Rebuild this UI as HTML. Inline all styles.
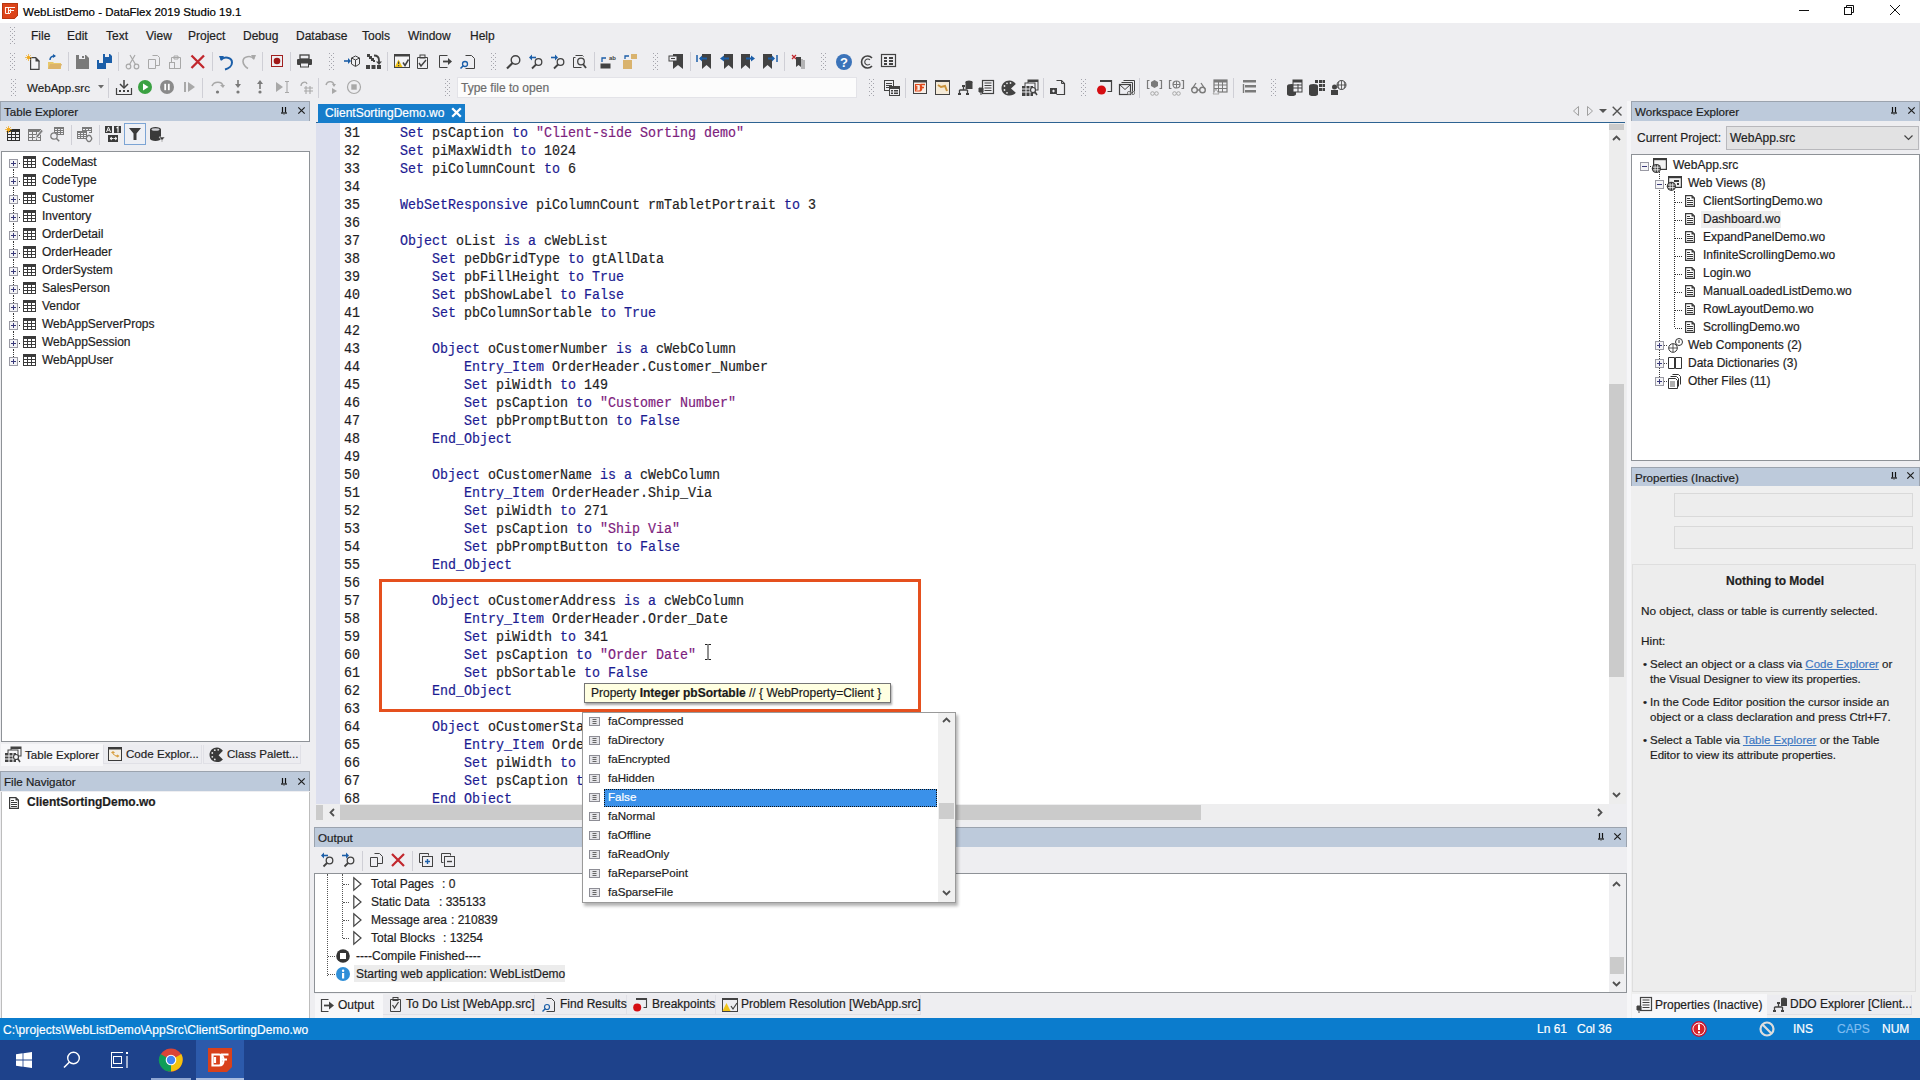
<!DOCTYPE html>
<html><head><meta charset="utf-8">
<style>
*{margin:0;padding:0;box-sizing:border-box}
html,body{width:1920px;height:1080px;overflow:hidden;background:#eeeef1;font-family:"Liberation Sans",sans-serif;font-size:12px;color:#1e1e1e}
.a{position:absolute}
svg{position:absolute;overflow:visible}
.t{position:absolute;white-space:pre;line-height:14px;-webkit-text-stroke:0.2px currentColor}
.ptitle{position:absolute;background:#bdcadb;height:20px;border:1px solid #9ba3ae;border-bottom:none}
.ptitle .tx{position:absolute;left:3px;top:3px;font-size:11.6px;color:#1e1e1e;white-space:pre;-webkit-text-stroke:0.2px currentColor}
.code{position:absolute;font-family:"Liberation Mono",monospace;font-size:15.5px;white-space:pre;line-height:18px;transform-origin:0 0;transform:scaleX(0.8602);color:#1e1e1e;-webkit-text-stroke:0.2px currentColor}
.k{color:#1c1c92}
.s{color:#7d217d}
.ln{position:absolute;font-family:"Liberation Mono",monospace;font-size:15.5px;line-height:18px;white-space:pre;color:#1e1e1e;transform-origin:0 0;transform:scaleX(0.8602);-webkit-text-stroke:0.2px currentColor}
.grip{position:absolute;width:5px;background-image:radial-gradient(circle at 1px 1px,#a9a9b0 0.55px,transparent 0.85px),radial-gradient(circle at 1px 1px,#a9a9b0 0.55px,transparent 0.85px);background-size:4px 4px,4px 4px;background-position:0 0,2px 2px}
.sep{position:absolute;width:1px;background:#cfcfd6}
.tr{position:absolute;white-space:pre;font-size:12px;color:#1e1e1e;line-height:14px;-webkit-text-stroke:0.2px currentColor}
</style></head><body>
<!-- TITLE BAR -->
<div class="a" style="left:0;top:0;width:1920px;height:23px;background:#fff"></div>
<svg style="left:2px;top:3px" width="16" height="16"><path d="M0 0H16V12.5L12.5 16H0Z" fill="#dc4318"/><path d="M0.5 0.5H15.5V12.3L12.3 15.5H0.5Z" fill="none" stroke="#b8360f" stroke-width="1"/><path d="M3.5 4.5H8.5M3.5 4v6.5M3.5 10.5H8M8.5 6v4M6.5 4.5H13M6.5 4.5v6M6.5 7.5H12" fill="none" stroke="#fff5ee" stroke-width="1.1"/></svg>
<div class="t" style="left:23px;top:5px;font-size:11.5px;color:#000">WebListDemo - DataFlex 2019 Studio 19.1</div>
<svg style="left:1799px;top:10px" width="12" height="2"><rect x="0" y="0" width="10" height="1" fill="#111"/></svg>
<svg style="left:1844px;top:5px" width="12" height="12"><rect x="0.5" y="2.5" width="7" height="7" fill="none" stroke="#111"/><path d="M2.5 2.5V0.5H9.5V7.5H7.5" fill="none" stroke="#111"/></svg>
<svg style="left:1890px;top:5px" width="12" height="12"><path d="M0 0L10 10M10 0L0 10" stroke="#111" stroke-width="1"/></svg>

<svg style="left:10px;top:27px" width="5" height="18" fill="#a4a4ac"><rect x="0" y="0" width="1" height="1"/><rect x="4" y="0" width="1" height="1"/><rect x="2" y="2" width="1" height="1"/><rect x="0" y="4" width="1" height="1"/><rect x="4" y="4" width="1" height="1"/><rect x="2" y="6" width="1" height="1"/><rect x="0" y="8" width="1" height="1"/><rect x="4" y="8" width="1" height="1"/><rect x="2" y="10" width="1" height="1"/><rect x="0" y="12" width="1" height="1"/><rect x="4" y="12" width="1" height="1"/><rect x="2" y="14" width="1" height="1"/><rect x="0" y="16" width="1" height="1"/><rect x="4" y="16" width="1" height="1"/></svg>
<div class="t" style="left:31px;top:29px">File</div>
<div class="t" style="left:67px;top:29px">Edit</div>
<div class="t" style="left:106px;top:29px">Text</div>
<div class="t" style="left:146px;top:29px">View</div>
<div class="t" style="left:188px;top:29px">Project</div>
<div class="t" style="left:243px;top:29px">Debug</div>
<div class="t" style="left:296px;top:29px">Database</div>
<div class="t" style="left:362px;top:29px">Tools</div>
<div class="t" style="left:408px;top:29px">Window</div>
<div class="t" style="left:470px;top:29px">Help</div>

<svg style="left:25px;top:54px" width="16" height="16"><path d="M5.6 3.6h5l3.4 3.4v8.4H5.6z" fill="#f4f4f6" stroke="#424242" stroke-width="1.2"/><path d="M10.5 3v4.5H15z" fill="#424242"/><circle cx="3.5" cy="3.5" r="1.5" fill="#f0a81a"/><path d="M3.5 0v7M0 3.5h7M1.2 1.2l4.6 4.6M5.8 1.2L1.2 5.8" stroke="#f0a81a" stroke-width="0.7"/></svg>
<svg style="left:47px;top:54px" width="16" height="16"><path d="M1 8h5l1 1h7v6H1z" fill="#e8c86a"/><path d="M1 15l2-5h12l-2 5z" fill="#dcb36a"/><path d="M3 6c0-3 2-4 5-4" fill="none" stroke="#1b5ea8" stroke-width="1.5"/><path d="M6 0l3 2-3 2z" fill="#1b5ea8"/></svg>
<svg style="left:75px;top:54px" width="16" height="16"><path d="M1 1h10l3 3v11H1z" fill="#7a7a7a"/><rect x="4" y="1" width="6" height="4" fill="#eeeef2"/><rect x="7" y="2" width="2" height="2" fill="#7a7a7a"/></svg>
<svg style="left:97px;top:54px" width="16" height="16"><path d="M6 0h7l2 2v7H6z" fill="#1b5ea8"/><path d="M0 6h7l2 2v7H0z" fill="#1b5ea8"/><rect x="2" y="6" width="4" height="3" fill="#eeeef2"/><rect x="8" y="0" width="4" height="3" fill="#eeeef2"/></svg>
<svg style="left:125px;top:54px" width="16" height="16"><circle cx="3.5" cy="12.5" r="2.3" fill="none" stroke="#a8a8a8" stroke-width="1.2"/><circle cx="11.5" cy="12.5" r="2.3" fill="none" stroke="#a8a8a8" stroke-width="1.2"/><path d="M4.5 10.5L10 1M10.5 10.5L5 1" stroke="#a8a8a8" stroke-width="1.2"/></svg>
<svg style="left:147px;top:54px" width="16" height="16"><path d="M1.5 5.5h7v9h-7z" fill="#eeeef2" stroke="#a8a8a8"/><path d="M5.5 1.5h5l2 2v8h-4" fill="none" stroke="#a8a8a8"/></svg>
<svg style="left:168px;top:54px" width="16" height="16"><path d="M3.5 3.5h9v11h-9z" fill="none" stroke="#a8a8a8"/><path d="M6 2h4v3H6z" fill="none" stroke="#a8a8a8"/><rect x="1.5" y="8.5" width="5" height="6" fill="#eeeef2" stroke="#a8a8a8"/></svg>
<svg style="left:190px;top:54px" width="16" height="16"><path d="M1.5 1.5L14 14M14 1.5L1.5 14" stroke="#c1272d" stroke-width="2.3"/></svg>
<svg style="left:219px;top:54px" width="16" height="16"><path d="M2 6c3-4 11-3 11 2.5 0 3-3 6-7 7" fill="none" stroke="#1b5ea8" stroke-width="2"/><path d="M0 2l5 0-3 5z" fill="#1b5ea8"/></svg>
<svg style="left:241px;top:54px" width="16" height="16"><path d="M13 5C10 1 2 2 2 7.5c0 3 3 6 5 7" fill="none" stroke="#a8a8a8" stroke-width="1.6"/><path d="M15 1l-5 0 3 5z" fill="#a8a8a8"/></svg>
<svg style="left:270px;top:54px" width="16" height="16"><rect x="1.5" y="1.5" width="11" height="11" fill="none" stroke="#a02020"/><circle cx="7" cy="7" r="3.3" fill="#a01818"/></svg>
<svg style="left:297px;top:54px" width="16" height="16"><rect x="0" y="5" width="15" height="6" rx="1" fill="#424242"/><rect x="3" y="1" width="9" height="4" fill="none" stroke="#424242" stroke-width="1.3"/><rect x="3.5" y="9" width="8" height="4" fill="#eeeef2" stroke="#424242"/></svg>
<svg style="left:344px;top:54px" width="16" height="16"><path d="M0 7h5" stroke="#1b5ea8" stroke-width="1.6"/><path d="M4 4l3 3-3 3z" fill="#1b5ea8"/><path d="M11.5 2l4 2v6l-4 2.5-4-2.5V4z" fill="none" stroke="#424242"/><path d="M7.5 4l4 2 4-2M11.5 6v6" fill="none" stroke="#424242"/></svg>
<svg style="left:366px;top:54px" width="16" height="16"><rect x="1" y="0" width="3" height="3" fill="#424242"/><rect x="3" y="2" width="3" height="3" fill="#424242"/><rect x="5" y="4" width="3" height="3" fill="#424242"/><rect x="7" y="6" width="2" height="2" fill="#424242"/><path d="M8 1.5c3.5 0 5 1.5 5 5v2" fill="none" stroke="#424242" stroke-width="1.8"/><path d="M10 7.5l3 3.5 3-3.5z" fill="#424242"/><rect x="0" y="11" width="4" height="4" fill="#424242"/><rect x="5.5" y="11" width="4" height="4" fill="#424242"/><rect x="11" y="11" width="4" height="4" fill="#424242"/></svg>
<svg style="left:394px;top:54px" width="16" height="16"><rect x="0" y="0" width="16" height="14" fill="#424242"/><rect x="1" y="2.5" width="14" height="10.5" fill="#f4f4f6"/><path d="M4.5 5.5l4 7.5H0.8z" fill="#f0c419"/><rect x="4" y="7.5" width="1.2" height="2.5" fill="#424242"/><rect x="4" y="11" width="1.2" height="1.2" fill="#424242"/><path d="M9 8.5l2 3 3.5-6" fill="none" stroke="#424242" stroke-width="1.5"/></svg>
<svg style="left:416px;top:54px" width="16" height="16"><path d="M1.5 3.5h10v11h-10z" fill="none" stroke="#424242"/><rect x="4" y="1" width="5" height="3" fill="none" stroke="#424242"/><path d="M3 9l2 3 5-6" fill="none" stroke="#424242" stroke-width="1.4"/></svg>
<svg style="left:438px;top:54px" width="16" height="16"><path d="M9.5 1.5h-8v12h8" fill="none" stroke="#424242"/><path d="M5 7.5h7" stroke="#424242" stroke-width="1.8"/><path d="M10 4l4 3.5-4 3.5z" fill="#424242"/></svg>
<svg style="left:460px;top:54px" width="16" height="16"><path d="M5.5 1.5h6l3 3v10h-9" fill="none" stroke="#424242"/><circle cx="5" cy="10" r="2.5" fill="none" stroke="#1b5ea8" stroke-width="1.3"/><path d="M3.5 11.5L0.5 14.5" stroke="#1b5ea8" stroke-width="1.6"/></svg>
<svg style="left:506px;top:54px" width="16" height="16"><circle cx="9.5" cy="6" r="4.3" fill="none" stroke="#424242" stroke-width="1.4"/><path d="M6.5 9L1 14.5" stroke="#424242" stroke-width="2.2"/></svg>
<svg style="left:529px;top:54px" width="16" height="16"><circle cx="9.5" cy="8" r="3.3" fill="none" stroke="#424242" stroke-width="1.3"/><path d="M7 10.5L3 14.5" stroke="#424242" stroke-width="1.8"/><path d="M2 3.5h5" stroke="#1b5ea8" stroke-width="1.6"/><path d="M3 0.5L0 3.5 3 6.5z" fill="#1b5ea8"/></svg>
<svg style="left:551px;top:54px" width="16" height="16"><circle cx="9.5" cy="8" r="3.3" fill="none" stroke="#424242" stroke-width="1.3"/><path d="M7 10.5L3 14.5" stroke="#424242" stroke-width="1.8"/><path d="M0 3.5h5" stroke="#1b5ea8" stroke-width="1.6"/><path d="M4 0.5L7 3.5 4 6.5z" fill="#1b5ea8"/></svg>
<svg style="left:572px;top:54px" width="16" height="16"><path d="M3.5 3.5h-2v10h8" fill="none" stroke="#424242"/><path d="M3.5 1.5h7l1 1" fill="none" stroke="#424242"/><circle cx="9" cy="7.5" r="3.3" fill="none" stroke="#424242" stroke-width="1.3"/><path d="M11 10l3 4" stroke="#424242" stroke-width="1.8"/></svg>
<svg style="left:600px;top:54px" width="16" height="16"><rect x="0.5" y="9.5" width="10" height="5" fill="#424242"/><text x="9" y="6" font-size="6" font-family="Liberation Sans" font-weight="bold" fill="#424242">ab</text><path d="M2 8V4h4" fill="none" stroke="#1b5ea8" stroke-width="1.3"/></svg>
<svg style="left:623px;top:54px" width="16" height="16"><rect x="8" y="0" width="6" height="5" fill="#d9b36e"/><rect x="0" y="6" width="9" height="9" fill="#d9b36e"/><path d="M2 5V2h4" fill="none" stroke="#1b5ea8" stroke-width="1.3"/></svg>
<svg style="left:669px;top:54px" width="16" height="16"><path d="M4 0h10v15l-5-4-5 4z" fill="#424242"/><rect x="0" y="2" width="8" height="5" fill="#eeeef2" stroke="#424242"/><path d="M2 4.5h4" stroke="#424242"/></svg>
<svg style="left:697px;top:54px" width="16" height="16"><path d="M5 0h9v15l-4.5-4-4.5 4z" fill="#424242"/><path d="M0 1v7" stroke="#1b5ea8" stroke-width="1.5"/><path d="M3 4.5h7" stroke="#1b5ea8" stroke-width="2"/><path d="M5 1.5L2 4.5 5 7.5z" fill="#1b5ea8"/></svg>
<svg style="left:720px;top:54px" width="16" height="16"><path d="M4 0h9v15l-4.5-4-4.5 4z" fill="#424242"/><path d="M2 4.5h7" stroke="#1b5ea8" stroke-width="2"/><path d="M4 1.5L0 4.5 4 7.5z" fill="#1b5ea8"/></svg>
<svg style="left:741px;top:54px" width="16" height="16"><path d="M0 0h9v15l-4.5-4-4.5 4z" fill="#424242"/><path d="M5 4.5h6" stroke="#1b5ea8" stroke-width="2"/><path d="M10 1.5L14 4.5 10 7.5z" fill="#1b5ea8"/></svg>
<svg style="left:763px;top:54px" width="16" height="16"><path d="M0 0h9v15l-4.5-4-4.5 4z" fill="#424242"/><path d="M5 4.5h5" stroke="#1b5ea8" stroke-width="2"/><path d="M9 1.5L12 4.5 9 7.5z" fill="#1b5ea8"/><path d="M14 1v7" stroke="#1b5ea8" stroke-width="1.5"/></svg>
<svg style="left:791px;top:54px" width="16" height="16"><path d="M1 1l4 4M5 1L1 5" stroke="#c1272d" stroke-width="1.2"/><path d="M5 3h5v10l-2.5-2-2.5 2z" fill="#424242"/><path d="M11 5v10M13 6v9" stroke="#7a7a7a"/></svg>
<svg style="left:836px;top:54px" width="16" height="16"><circle cx="8" cy="8" r="8" fill="#3b73b9"/><text x="8" y="12.5" font-size="13" text-anchor="middle" font-family="Liberation Sans" font-weight="bold" fill="#fff">?</text></svg>
<svg style="left:859px;top:54px" width="16" height="16"><path d="M13 4A6 6 0 1 0 13 12" fill="none" stroke="#424242" stroke-width="1.6"/><path d="M11 6A3 3 0 1 0 11 10" fill="none" stroke="#424242" stroke-width="1.1"/></svg>
<svg style="left:881px;top:54px" width="16" height="16"><rect x="0.5" y="0.5" width="14" height="12" fill="none" stroke="#424242" stroke-width="1.2"/><rect x="3" y="3" width="3" height="2" fill="#424242"/><rect x="8" y="3" width="4" height="2" fill="#424242"/><rect x="3" y="6" width="3" height="2" fill="#424242"/><rect x="8" y="6" width="4" height="2" fill="#424242"/><rect x="3" y="9" width="3" height="2" fill="#424242"/><rect x="8" y="9" width="4" height="2" fill="#424242"/></svg>
<svg style="left:116px;top:80px" width="16" height="16"><path d="M0.5 8v6.5h15V8" fill="none" stroke="#424242" stroke-width="1.2"/><path d="M8 0v7" stroke="#424242" stroke-width="1.5"/><path d="M4 4l4 4 4-4" fill="none" stroke="#424242" stroke-width="1.5"/><rect x="3" y="10" width="2" height="2" fill="#424242"/><rect x="7" y="10" width="2" height="2" fill="#424242"/><rect x="11" y="10" width="2" height="2" fill="#424242"/></svg>
<svg style="left:138px;top:80px" width="16" height="16"><circle cx="7" cy="7" r="7" fill="#3aa142"/><path d="M5 3.5l5.5 3.5L5 10.5z" fill="#fff"/></svg>
<svg style="left:160px;top:80px" width="16" height="16"><circle cx="7" cy="7" r="7" fill="#8a8a8a"/><rect x="4.3" y="3.8" width="1.8" height="6.4" fill="#fff"/><rect x="7.9" y="3.8" width="1.8" height="6.4" fill="#fff"/></svg>
<svg style="left:184px;top:80px" width="16" height="16"><rect x="0" y="2" width="2" height="10" fill="#a8a8a8"/><path d="M4 2l7 5-7 5z" fill="#a8a8a8"/></svg>
<svg style="left:211px;top:80px" width="16" height="16"><path d="M1 6C3 1 11 1 12 6" fill="none" stroke="#a8a8a8" stroke-width="1.6"/><path d="M9 5h5l-2 3z" fill="#a8a8a8"/><circle cx="6.5" cy="12" r="1.6" fill="#7a7a7a"/></svg>
<svg style="left:234px;top:80px" width="16" height="16"><path d="M4 0v6" stroke="#7a7a7a" stroke-width="1.6"/><path d="M1 4l3 4 3-4z" fill="#7a7a7a"/><circle cx="4" cy="12" r="1.6" fill="#7a7a7a"/></svg>
<svg style="left:256px;top:80px" width="16" height="16"><path d="M4 3v6" stroke="#7a7a7a" stroke-width="1.6"/><path d="M1 4l3-4 3 4z" fill="#7a7a7a"/><circle cx="4" cy="12" r="1.6" fill="#7a7a7a"/></svg>
<svg style="left:276px;top:80px" width="16" height="16"><path d="M0 2l7 5-7 5z" fill="#a8a8a8"/><path d="M9 1.5h4M11 1.5v11M9 12.5h4" stroke="#a8a8a8" stroke-width="1.1"/></svg>
<svg style="left:299px;top:80px" width="16" height="16"><path d="M2 6c0-4 5-5 6-2" fill="none" stroke="#a8a8a8" stroke-width="1.3"/><path d="M5 8h9M5 11h9M7 6v8M11 6v8" stroke="#a8a8a8" stroke-width="1.1"/></svg>
<svg style="left:325px;top:80px" width="16" height="16"><path d="M1 5c1-4 7-5 8 0" fill="none" stroke="#a8a8a8" stroke-width="1.4"/><path d="M7 4h4l-2 3z" fill="#a8a8a8"/><path d="M7 8l5 3-5 3z" fill="#a8a8a8"/></svg>
<svg style="left:347px;top:80px" width="16" height="16"><circle cx="7" cy="7" r="6.5" fill="none" stroke="#a8a8a8" stroke-width="1.2"/><rect x="4.3" y="4.3" width="5.4" height="5.4" fill="#a8a8a8"/></svg>
<svg style="left:884px;top:80px" width="16" height="16"><rect x="0" y="0" width="10" height="11" fill="#424242"/><rect x="1" y="1" width="8" height="9" fill="#eeeef2"/><rect x="2" y="3" width="6" height="1" fill="#424242"/><rect x="2" y="5" width="6" height="1" fill="#424242"/><rect x="2" y="7" width="4" height="1" fill="#424242"/><rect x="5" y="6" width="11" height="10" fill="#424242"/><rect x="6" y="9" width="9" height="6" fill="#eeeef2"/><rect x="7" y="10" width="2" height="1.5" fill="#424242"/><rect x="10" y="10" width="4" height="1.5" fill="#424242"/><rect x="7" y="12.5" width="2" height="1.5" fill="#424242"/><rect x="10" y="12.5" width="4" height="1.5" fill="#424242"/></svg>
<svg style="left:913px;top:80px" width="16" height="16"><rect x="0" y="0" width="14" height="14" fill="#424242"/><rect x="1" y="2.5" width="12" height="10.5" fill="#f7efe9"/><path d="M2.5 4.5h3.5c2 0 2.8 1.3 2.8 3.2S8 11 6 11H2.5zM3.8 5.8v3.9" fill="none" stroke="#e0491a" stroke-width="1.2"/><path d="M7.5 4.5h4.5M7.5 4.5V11M7.5 7.5h3.5" fill="none" stroke="#e0491a" stroke-width="1.3"/></svg>
<svg style="left:935px;top:80px" width="16" height="16"><rect x="0.5" y="0.5" width="14" height="14" fill="#f4ead8" stroke="#424242"/><rect x="0" y="0" width="15" height="2" fill="#424242"/><path d="M3 5l3 2 4-1 2 5" fill="none" stroke="#c9923a" stroke-width="2"/></svg>
<svg style="left:957px;top:80px" width="16" height="16"><path d="M6.5 6v4M2.5 10v4M10.5 10v4M2.5 10h8" fill="none" stroke="#424242" stroke-width="1.3"/><rect x="5" y="5" width="3" height="2" fill="#424242"/><rect x="1" y="13" width="3" height="2" fill="#424242"/><rect x="9" y="13" width="3" height="2" fill="#424242"/><ellipse cx="12" cy="2" rx="3.5" ry="1.5" fill="#424242"/><rect x="8.5" y="2" width="7" height="7" fill="#424242"/></svg>
<svg style="left:979px;top:80px" width="16" height="16"><rect x="3.5" y="0.5" width="11" height="13" fill="none" stroke="#424242" stroke-width="1.2"/><path d="M5.5 3h7M5.5 5.5h7M5.5 8h7M5.5 10.5h7" stroke="#424242"/><path d="M0 8h4v4h-4zM2 12v3" fill="#424242" stroke="#424242"/></svg>
<svg style="left:1001px;top:80px" width="16" height="16"><path d="M8.5 0.5C4 0.5 0.5 3.8 0.5 8.2S4 15.5 8.5 15.5c2.7 0 4.8-1.1 6.3-2.8L10 8.5l4.8-4.6C13.3 1.8 11.2 0.5 8.5 0.5z" fill="#424242"/><circle cx="3.5" cy="6" r="0.9" fill="#e8e8e8"/><circle cx="6" cy="3.3" r="0.9" fill="#e8e8e8"/><circle cx="3.5" cy="10" r="0.9" fill="#e8e8e8"/><circle cx="6" cy="12.8" r="0.9" fill="#e8e8e8"/><circle cx="9.5" cy="3" r="0.9" fill="#e8e8e8"/></svg>
<svg style="left:1022px;top:80px" width="16" height="16"><rect x="6" y="0" width="10" height="10" fill="none" stroke="#424242"/><rect x="6" y="0" width="10" height="2" fill="#424242"/><rect x="3" y="3" width="10" height="10" fill="#eeeef2" stroke="#424242"/><rect x="0" y="6" width="11" height="10" fill="#424242"/><path d="M0 9h11M0 12h11M4 6v10M8 6v10" stroke="#eeeef2"/><circle cx="11" cy="10" r="2.5" fill="#eeeef2" stroke="#424242" stroke-width="1.2"/><path d="M13 12l2 3" stroke="#424242" stroke-width="1.5"/></svg>
<svg style="left:1050px;top:80px" width="16" height="16"><path d="M6.5 0.5h5l3 3v11h-8" fill="none" stroke="#424242" stroke-width="1.2"/><path d="M11.5 0.5v3h3" fill="none" stroke="#424242"/><rect x="0" y="8" width="7" height="6" fill="#424242"/><path d="M2 11l1.5-1.5v3zM5 11l-1.5-1.5v3z" fill="#eeeef2"/></svg>
<svg style="left:1097px;top:80px" width="16" height="16"><path d="M3.5 0.5h11v11h-4" fill="none" stroke="#424242" stroke-width="1.2"/><rect x="3" y="0" width="12" height="2" fill="#424242"/><circle cx="4.5" cy="10" r="4.5" fill="#d50d12"/></svg>
<svg style="left:1119px;top:80px" width="16" height="16"><path d="M4.5 0.5h11v11" fill="none" stroke="#424242"/><path d="M2.5 2.5h11v11" fill="none" stroke="#424242"/><rect x="0.5" y="4.5" width="11" height="10" fill="#eeeef2" stroke="#424242" stroke-width="1.2"/><path d="M0.5 4.5l5.5 5 5.5-5" fill="none" stroke="#424242"/><circle cx="10" cy="13" r="1.6" fill="none" stroke="#7a7a7a"/><circle cx="14" cy="13" r="1.6" fill="none" stroke="#7a7a7a"/></svg>
<svg style="left:1147px;top:80px" width="16" height="16"><path d="M2.5 0.5h-2v8h2M12.5 0.5h2v8h-2" fill="none" stroke="#7a7a7a" stroke-width="1.2"/><path d="M4 2l3.5-2 3.5 2v4l-3.5 2-3.5-2z" fill="#7a7a7a"/><circle cx="5.5" cy="13.5" r="1.8" fill="none" stroke="#a8a8a8"/><circle cx="9.5" cy="13.5" r="1.8" fill="none" stroke="#a8a8a8"/></svg>
<svg style="left:1169px;top:80px" width="16" height="16"><path d="M2.5 0.5h-2v8h2M12.5 0.5h2v8h-2" fill="none" stroke="#7a7a7a" stroke-width="1.2"/><circle cx="7.5" cy="4.5" r="3.5" fill="none" stroke="#7a7a7a" stroke-width="1.2"/><path d="M4 4.5h7M7.5 1v7" stroke="#7a7a7a"/><circle cx="5.5" cy="13.5" r="1.8" fill="none" stroke="#a8a8a8"/><circle cx="9.5" cy="13.5" r="1.8" fill="none" stroke="#a8a8a8"/></svg>
<svg style="left:1191px;top:80px" width="16" height="16"><circle cx="3.5" cy="10" r="2.8" fill="none" stroke="#7a7a7a" stroke-width="1.4"/><circle cx="11.5" cy="10" r="2.8" fill="none" stroke="#7a7a7a" stroke-width="1.4"/><path d="M1 9L5 3M14 9L10 3M6 10h3" fill="none" stroke="#7a7a7a" stroke-width="1.3"/></svg>
<svg style="left:1213px;top:80px" width="16" height="16"><rect x="1" y="0" width="13" height="12" fill="none" stroke="#7a7a7a" stroke-width="1.2"/><rect x="1" y="0" width="13" height="2.5" fill="#7a7a7a"/><path d="M1 5h13M1 8.5h13M5.5 0v12M9.5 0v12" stroke="#7a7a7a"/><path d="M3 9l-3 5h6z" fill="#eeeef2" stroke="#a8a8a8"/></svg>
<svg style="left:1241px;top:80px" width="16" height="16"><rect x="2" y="0" width="13" height="2.5" fill="#7a7a7a"/><rect x="4" y="5" width="11" height="2.5" fill="#7a7a7a"/><rect x="4" y="10" width="11" height="2.5" fill="#7a7a7a"/><path d="M2.5 4v9" fill="none" stroke="#7a7a7a" stroke-width="1.4"/></svg>
<svg style="left:1287px;top:80px" width="16" height="16"><ellipse cx="4.5" cy="6" rx="4.5" ry="2" fill="#424242"/><rect x="0" y="6" width="9" height="8" fill="#424242"/><ellipse cx="4.5" cy="14" rx="4.5" ry="2" fill="#424242"/><rect x="6" y="0" width="9" height="12" fill="#eeeef2" stroke="#424242"/><rect x="6" y="0" width="9" height="2.5" fill="#424242"/><path d="M11 4v8M6 5h9M6 8h9" stroke="#424242"/></svg>
<svg style="left:1309px;top:80px" width="16" height="16"><ellipse cx="4.5" cy="6" rx="4.5" ry="2" fill="#424242"/><rect x="0" y="6" width="9" height="8" fill="#424242"/><ellipse cx="4.5" cy="14" rx="4.5" ry="2" fill="#424242"/><rect x="6" y="0" width="3" height="3" fill="#424242"/><rect x="10" y="0" width="3" height="3" fill="#424242"/><rect x="13.5" y="0" width="2.5" height="3" fill="#424242"/><rect x="10" y="4" width="3" height="3" fill="#424242"/><rect x="13.5" y="4" width="2.5" height="3" fill="#424242"/><rect x="10" y="8" width="3" height="3" fill="#424242"/><rect x="13.5" y="8" width="2.5" height="3" fill="#424242"/></svg>
<svg style="left:1331px;top:80px" width="16" height="16"><circle cx="10.5" cy="5" r="4.5" fill="none" stroke="#424242"/><path d="M6 5h9M10.5 0.5v9M8 1.5c-1 2-1 5 0 7M13 1.5c1 2 1 5 0 7" fill="none" stroke="#424242" stroke-width="0.8"/><circle cx="3.5" cy="7" r="2.5" fill="#424242"/><rect x="0" y="10" width="7" height="5" fill="#424242"/></svg>
<div class="sep" style="left:68px;top:52px;height:19px"></div>
<div class="sep" style="left:118px;top:52px;height:19px"></div>
<div class="sep" style="left:212px;top:52px;height:19px"></div>
<div class="sep" style="left:262px;top:52px;height:19px"></div>
<div class="sep" style="left:290px;top:52px;height:19px"></div>
<div class="sep" style="left:387px;top:52px;height:19px"></div>
<div class="sep" style="left:594px;top:52px;height:19px"></div>
<div class="sep" style="left:690px;top:52px;height:19px"></div>
<div class="sep" style="left:784px;top:52px;height:19px"></div>
<div class="sep" style="left:108px;top:78px;height:20px"></div>
<div class="sep" style="left:202px;top:78px;height:20px"></div>
<div class="sep" style="left:318px;top:78px;height:20px"></div>
<div class="sep" style="left:905px;top:78px;height:20px"></div>
<div class="sep" style="left:1043px;top:78px;height:20px"></div>
<div class="sep" style="left:1139px;top:78px;height:20px"></div>
<div class="sep" style="left:1233px;top:78px;height:20px"></div>
<svg style="left:10px;top:53px" width="5" height="18" fill="#a4a4ac"><rect x="0" y="0" width="1" height="1"/><rect x="4" y="0" width="1" height="1"/><rect x="2" y="2" width="1" height="1"/><rect x="0" y="4" width="1" height="1"/><rect x="4" y="4" width="1" height="1"/><rect x="2" y="6" width="1" height="1"/><rect x="0" y="8" width="1" height="1"/><rect x="4" y="8" width="1" height="1"/><rect x="2" y="10" width="1" height="1"/><rect x="0" y="12" width="1" height="1"/><rect x="4" y="12" width="1" height="1"/><rect x="2" y="14" width="1" height="1"/><rect x="0" y="16" width="1" height="1"/><rect x="4" y="16" width="1" height="1"/></svg>
<svg style="left:329px;top:53px" width="5" height="18" fill="#a4a4ac"><rect x="0" y="0" width="1" height="1"/><rect x="4" y="0" width="1" height="1"/><rect x="2" y="2" width="1" height="1"/><rect x="0" y="4" width="1" height="1"/><rect x="4" y="4" width="1" height="1"/><rect x="2" y="6" width="1" height="1"/><rect x="0" y="8" width="1" height="1"/><rect x="4" y="8" width="1" height="1"/><rect x="2" y="10" width="1" height="1"/><rect x="0" y="12" width="1" height="1"/><rect x="4" y="12" width="1" height="1"/><rect x="2" y="14" width="1" height="1"/><rect x="0" y="16" width="1" height="1"/><rect x="4" y="16" width="1" height="1"/></svg>
<svg style="left:491px;top:53px" width="5" height="18" fill="#a4a4ac"><rect x="0" y="0" width="1" height="1"/><rect x="4" y="0" width="1" height="1"/><rect x="2" y="2" width="1" height="1"/><rect x="0" y="4" width="1" height="1"/><rect x="4" y="4" width="1" height="1"/><rect x="2" y="6" width="1" height="1"/><rect x="0" y="8" width="1" height="1"/><rect x="4" y="8" width="1" height="1"/><rect x="2" y="10" width="1" height="1"/><rect x="0" y="12" width="1" height="1"/><rect x="4" y="12" width="1" height="1"/><rect x="2" y="14" width="1" height="1"/><rect x="0" y="16" width="1" height="1"/><rect x="4" y="16" width="1" height="1"/></svg>
<svg style="left:653px;top:53px" width="5" height="18" fill="#a4a4ac"><rect x="0" y="0" width="1" height="1"/><rect x="4" y="0" width="1" height="1"/><rect x="2" y="2" width="1" height="1"/><rect x="0" y="4" width="1" height="1"/><rect x="4" y="4" width="1" height="1"/><rect x="2" y="6" width="1" height="1"/><rect x="0" y="8" width="1" height="1"/><rect x="4" y="8" width="1" height="1"/><rect x="2" y="10" width="1" height="1"/><rect x="0" y="12" width="1" height="1"/><rect x="4" y="12" width="1" height="1"/><rect x="2" y="14" width="1" height="1"/><rect x="0" y="16" width="1" height="1"/><rect x="4" y="16" width="1" height="1"/></svg>
<svg style="left:821px;top:53px" width="5" height="18" fill="#a4a4ac"><rect x="0" y="0" width="1" height="1"/><rect x="4" y="0" width="1" height="1"/><rect x="2" y="2" width="1" height="1"/><rect x="0" y="4" width="1" height="1"/><rect x="4" y="4" width="1" height="1"/><rect x="2" y="6" width="1" height="1"/><rect x="0" y="8" width="1" height="1"/><rect x="4" y="8" width="1" height="1"/><rect x="2" y="10" width="1" height="1"/><rect x="0" y="12" width="1" height="1"/><rect x="4" y="12" width="1" height="1"/><rect x="2" y="14" width="1" height="1"/><rect x="0" y="16" width="1" height="1"/><rect x="4" y="16" width="1" height="1"/></svg>
<svg style="left:11px;top:79px" width="5" height="18" fill="#a4a4ac"><rect x="0" y="0" width="1" height="1"/><rect x="4" y="0" width="1" height="1"/><rect x="2" y="2" width="1" height="1"/><rect x="0" y="4" width="1" height="1"/><rect x="4" y="4" width="1" height="1"/><rect x="2" y="6" width="1" height="1"/><rect x="0" y="8" width="1" height="1"/><rect x="4" y="8" width="1" height="1"/><rect x="2" y="10" width="1" height="1"/><rect x="0" y="12" width="1" height="1"/><rect x="4" y="12" width="1" height="1"/><rect x="2" y="14" width="1" height="1"/><rect x="0" y="16" width="1" height="1"/><rect x="4" y="16" width="1" height="1"/></svg>
<svg style="left:445px;top:79px" width="5" height="18" fill="#a4a4ac"><rect x="0" y="0" width="1" height="1"/><rect x="4" y="0" width="1" height="1"/><rect x="2" y="2" width="1" height="1"/><rect x="0" y="4" width="1" height="1"/><rect x="4" y="4" width="1" height="1"/><rect x="2" y="6" width="1" height="1"/><rect x="0" y="8" width="1" height="1"/><rect x="4" y="8" width="1" height="1"/><rect x="2" y="10" width="1" height="1"/><rect x="0" y="12" width="1" height="1"/><rect x="4" y="12" width="1" height="1"/><rect x="2" y="14" width="1" height="1"/><rect x="0" y="16" width="1" height="1"/><rect x="4" y="16" width="1" height="1"/></svg>
<svg style="left:869px;top:79px" width="5" height="18" fill="#a4a4ac"><rect x="0" y="0" width="1" height="1"/><rect x="4" y="0" width="1" height="1"/><rect x="2" y="2" width="1" height="1"/><rect x="0" y="4" width="1" height="1"/><rect x="4" y="4" width="1" height="1"/><rect x="2" y="6" width="1" height="1"/><rect x="0" y="8" width="1" height="1"/><rect x="4" y="8" width="1" height="1"/><rect x="2" y="10" width="1" height="1"/><rect x="0" y="12" width="1" height="1"/><rect x="4" y="12" width="1" height="1"/><rect x="2" y="14" width="1" height="1"/><rect x="0" y="16" width="1" height="1"/><rect x="4" y="16" width="1" height="1"/></svg>
<svg style="left:1081px;top:79px" width="5" height="18" fill="#a4a4ac"><rect x="0" y="0" width="1" height="1"/><rect x="4" y="0" width="1" height="1"/><rect x="2" y="2" width="1" height="1"/><rect x="0" y="4" width="1" height="1"/><rect x="4" y="4" width="1" height="1"/><rect x="2" y="6" width="1" height="1"/><rect x="0" y="8" width="1" height="1"/><rect x="4" y="8" width="1" height="1"/><rect x="2" y="10" width="1" height="1"/><rect x="0" y="12" width="1" height="1"/><rect x="4" y="12" width="1" height="1"/><rect x="2" y="14" width="1" height="1"/><rect x="0" y="16" width="1" height="1"/><rect x="4" y="16" width="1" height="1"/></svg>
<svg style="left:1271px;top:79px" width="5" height="18" fill="#a4a4ac"><rect x="0" y="0" width="1" height="1"/><rect x="4" y="0" width="1" height="1"/><rect x="2" y="2" width="1" height="1"/><rect x="0" y="4" width="1" height="1"/><rect x="4" y="4" width="1" height="1"/><rect x="2" y="6" width="1" height="1"/><rect x="0" y="8" width="1" height="1"/><rect x="4" y="8" width="1" height="1"/><rect x="2" y="10" width="1" height="1"/><rect x="0" y="12" width="1" height="1"/><rect x="4" y="12" width="1" height="1"/><rect x="2" y="14" width="1" height="1"/><rect x="0" y="16" width="1" height="1"/><rect x="4" y="16" width="1" height="1"/></svg>
<div class="t" style="left:27px;top:81px;font-size:11.6px">WebApp.src</div>
<svg style="left:98px;top:85px" width="6" height="4"><path d="M0 0h6L3 3.5z" fill="#6a6a6a"/></svg>
<div class="a" style="left:457px;top:77px;width:400px;height:21px;background:#fcfcfc;border:1px solid #e3e3e8"></div>
<div class="t" style="left:461px;top:81px;font-size:12px;color:#6d6d6d">Type file to open</div>

<!-- LEFT PANEL -->
<div class="ptitle" style="left:0px;top:101px;width:310px"><span class="tx">Table Explorer</span></div>
<div class="a" style="left:1px;top:151px;width:309px;height:591px;background:#fff;border:1px solid #8e9297"></div>
<div class="ptitle" style="left:0px;top:771px;width:310px"><span class="tx">File Navigator</span></div>
<div class="a" style="left:1px;top:792px;width:309px;height:226px;background:#fff;border-left:1px solid #bdbdbd;border-right:1px solid #bdbdbd"></div>
<svg style="left:281px;top:107px" width="8" height="10"><path d="M1.5 0v5.5M4.5 0v5.5" stroke="#111" stroke-width="1.2"/><path d="M0 6h6" stroke="#111" stroke-width="1.2"/><path d="M3 6.5v1.5" stroke="#666" stroke-width="1"/></svg>
<svg style="left:298px;top:107px" width="8" height="8"><path d="M0.3 0.3l6.4 6.4M6.7 0.3l-6.4 6.4" stroke="#1e1e1e" stroke-width="1.2"/></svg>
<svg style="left:281px;top:778px" width="8" height="10"><path d="M1.5 0v5.5M4.5 0v5.5" stroke="#111" stroke-width="1.2"/><path d="M0 6h6" stroke="#111" stroke-width="1.2"/><path d="M3 6.5v1.5" stroke="#666" stroke-width="1"/></svg>
<svg style="left:298px;top:778px" width="8" height="8"><path d="M0.3 0.3l6.4 6.4M6.7 0.3l-6.4 6.4" stroke="#1e1e1e" stroke-width="1.2"/></svg>
<svg style="left:5px;top:126px" width="16" height="16"><rect x="2" y="3" width="13" height="12" fill="#2e2e2e"/><rect x="3" y="6" width="3" height="2" fill="#eeeef2"/><rect x="3" y="9" width="3" height="2" fill="#eeeef2"/><rect x="3" y="12" width="3" height="2" fill="#eeeef2"/><rect x="7" y="6" width="3" height="2" fill="#eeeef2"/><rect x="7" y="9" width="3" height="2" fill="#eeeef2"/><rect x="7" y="12" width="3" height="2" fill="#eeeef2"/><rect x="11" y="6" width="3" height="2" fill="#eeeef2"/><rect x="11" y="9" width="3" height="2" fill="#eeeef2"/><rect x="11" y="12" width="3" height="2" fill="#eeeef2"/><circle cx="3.5" cy="3.5" r="1.8" fill="#f0a81a"/><path d="M3.5 0v7M0 3.5h7M1 1l5 5M6 1L1 6" stroke="#f0a81a" stroke-width="0.7"/></svg>
<svg style="left:28px;top:126px" width="16" height="16"><rect x="0" y="3" width="13" height="12" fill="#7a7a7a"/><rect x="1" y="6" width="3" height="2" fill="#eeeef2"/><rect x="1" y="9" width="3" height="2" fill="#eeeef2"/><rect x="1" y="12" width="3" height="2" fill="#eeeef2"/><rect x="5" y="6" width="3" height="2" fill="#eeeef2"/><rect x="5" y="9" width="3" height="2" fill="#eeeef2"/><rect x="5" y="12" width="3" height="2" fill="#eeeef2"/><rect x="9" y="6" width="3" height="2" fill="#eeeef2"/><rect x="9" y="9" width="3" height="2" fill="#eeeef2"/><rect x="9" y="12" width="3" height="2" fill="#eeeef2"/><path d="M8 10l5.5-6.5 1.8 1.5-5.5 6.5-2.3 0.8z" fill="#7a7a7a" stroke="#eeeef2" stroke-width="0.8"/></svg>
<svg style="left:50px;top:127px" width="16" height="16"><rect x="4" y="0" width="10" height="8" fill="#7a7a7a"/><rect x="5" y="2" width="2" height="1" fill="#eeeef2"/><rect x="5" y="4" width="2" height="1" fill="#eeeef2"/><rect x="5" y="6" width="2" height="1" fill="#eeeef2"/><rect x="8" y="2" width="2" height="1" fill="#eeeef2"/><rect x="8" y="4" width="2" height="1" fill="#eeeef2"/><rect x="8" y="6" width="2" height="1" fill="#eeeef2"/><rect x="11" y="2" width="2" height="1" fill="#eeeef2"/><rect x="11" y="4" width="2" height="1" fill="#eeeef2"/><rect x="11" y="6" width="2" height="1" fill="#eeeef2"/><circle cx="4" cy="9" r="3.2" fill="#eeeef2" stroke="#7a7a7a" stroke-width="1.2"/><path d="M6.2 11.3l3 3" stroke="#7a7a7a" stroke-width="1.5"/></svg>
<div class="sep" style="left:71px;top:125px;height:20px"></div>
<svg style="left:77px;top:127px" width="16" height="16"><rect x="5" y="0" width="10" height="6" fill="#7a7a7a"/><rect x="6" y="2" width="2" height="1" fill="#eeeef2"/><rect x="6" y="4" width="2" height="1" fill="#eeeef2"/><rect x="9" y="2" width="2" height="1" fill="#eeeef2"/><rect x="9" y="4" width="2" height="1" fill="#eeeef2"/><rect x="12" y="2" width="2" height="1" fill="#eeeef2"/><rect x="12" y="4" width="2" height="1" fill="#eeeef2"/><rect x="0" y="4" width="12" height="10" fill="#eeeef2"/><rect x="0" y="4" width="10" height="8" fill="#7a7a7a"/><rect x="1" y="6" width="2" height="1" fill="#eeeef2"/><rect x="1" y="8" width="2" height="1" fill="#eeeef2"/><rect x="1" y="10" width="2" height="1" fill="#eeeef2"/><rect x="4" y="6" width="2" height="1" fill="#eeeef2"/><rect x="4" y="8" width="2" height="1" fill="#eeeef2"/><rect x="4" y="10" width="2" height="1" fill="#eeeef2"/><rect x="7" y="6" width="2" height="1" fill="#eeeef2"/><rect x="7" y="8" width="2" height="1" fill="#eeeef2"/><rect x="7" y="10" width="2" height="1" fill="#eeeef2"/><path d="M10 9a3 3 0 1 1 0 5M14 14a3 3 0 1 1 0-5" fill="none" stroke="#7a7a7a" stroke-width="1.2"/></svg>
<div class="sep" style="left:99px;top:125px;height:20px"></div>
<svg style="left:105px;top:126px" width="16" height="16"><rect x="0" y="0" width="7" height="7" fill="#3a3a3a"/><rect x="9" y="0" width="7" height="7" fill="#3a3a3a"/><rect x="3" y="9" width="10" height="7" fill="#3a3a3a"/><path d="M1.5 6L3.5 1 5.5 6M2.3 4.2h2.4" fill="none" stroke="#fff" stroke-width="0.9"/><path d="M11.5 2l1.5-1v5.5" fill="none" stroke="#fff" stroke-width="1.1"/><path d="M5 12.5h3M7 11l-2 1.5 2 1.5M8.5 12.5h3M10 11l2 1.5-2 1.5" fill="none" stroke="#fff" stroke-width="0.9"/></svg>
<div class="a" style="left:124px;top:123px;width:22px;height:22px;border:1px solid #7ca4d4;background:#eef0f5"></div>
<svg style="left:129px;top:128px" width="13" height="13"><path d="M0 0h12L7.5 5.5v6.5h-3V5.5z" fill="#3a3a3a"/></svg>
<svg style="left:150px;top:127px" width="16" height="16"><ellipse cx="5.5" cy="2.5" rx="5.5" ry="2.5" fill="#3a3a3a"/><rect x="0" y="2.5" width="11" height="9" fill="#3a3a3a"/><ellipse cx="5.5" cy="11.5" rx="5.5" ry="2.5" fill="#3a3a3a"/><ellipse cx="5.5" cy="2.5" rx="4" ry="1.3" fill="#cfcfd4"/><path d="M9 10h6l-2.5 3v2h-1v-2z" fill="#3a3a3a" stroke="#eeeef2" stroke-width="0.6"/></svg>
<svg style="left:9px;top:159px" width="9" height="9"><rect x="0.5" y="0.5" width="8" height="8" fill="#f4f4f6" stroke="#9a9aa4"/><path d="M2 4.5h5M4.5 2v5" stroke="#3a3a7a" stroke-width="1"/></svg>
<div class="a" style="left:19px;top:163px;width:1px;height:1px;background:#222"></div>
<svg style="left:23px;top:156px" width="13" height="12"><rect x="0" y="0" width="13" height="12" fill="#3a3a3a"/><rect x="1" y="3" width="3" height="2" fill="#fff"/><rect x="1" y="6" width="3" height="2" fill="#fff"/><rect x="1" y="9" width="3" height="2" fill="#fff"/><rect x="5" y="3" width="3" height="2" fill="#fff"/><rect x="5" y="6" width="3" height="2" fill="#fff"/><rect x="5" y="9" width="3" height="2" fill="#fff"/><rect x="9" y="3" width="3" height="2" fill="#fff"/><rect x="9" y="6" width="3" height="2" fill="#fff"/><rect x="9" y="9" width="3" height="2" fill="#fff"/></svg>
<div class="tr" style="left:42px;top:155px">CodeMast</div>
<div class="a" style="left:13px;top:169px;width:1px;height:8px;border-left:1px dotted #333"></div>
<svg style="left:9px;top:177px" width="9" height="9"><rect x="0.5" y="0.5" width="8" height="8" fill="#f4f4f6" stroke="#9a9aa4"/><path d="M2 4.5h5M4.5 2v5" stroke="#3a3a7a" stroke-width="1"/></svg>
<div class="a" style="left:19px;top:181px;width:1px;height:1px;background:#222"></div>
<svg style="left:23px;top:174px" width="13" height="12"><rect x="0" y="0" width="13" height="12" fill="#3a3a3a"/><rect x="1" y="3" width="3" height="2" fill="#fff"/><rect x="1" y="6" width="3" height="2" fill="#fff"/><rect x="1" y="9" width="3" height="2" fill="#fff"/><rect x="5" y="3" width="3" height="2" fill="#fff"/><rect x="5" y="6" width="3" height="2" fill="#fff"/><rect x="5" y="9" width="3" height="2" fill="#fff"/><rect x="9" y="3" width="3" height="2" fill="#fff"/><rect x="9" y="6" width="3" height="2" fill="#fff"/><rect x="9" y="9" width="3" height="2" fill="#fff"/></svg>
<div class="tr" style="left:42px;top:173px">CodeType</div>
<div class="a" style="left:13px;top:187px;width:1px;height:8px;border-left:1px dotted #333"></div>
<svg style="left:9px;top:195px" width="9" height="9"><rect x="0.5" y="0.5" width="8" height="8" fill="#f4f4f6" stroke="#9a9aa4"/><path d="M2 4.5h5M4.5 2v5" stroke="#3a3a7a" stroke-width="1"/></svg>
<div class="a" style="left:19px;top:199px;width:1px;height:1px;background:#222"></div>
<svg style="left:23px;top:192px" width="13" height="12"><rect x="0" y="0" width="13" height="12" fill="#3a3a3a"/><rect x="1" y="3" width="3" height="2" fill="#fff"/><rect x="1" y="6" width="3" height="2" fill="#fff"/><rect x="1" y="9" width="3" height="2" fill="#fff"/><rect x="5" y="3" width="3" height="2" fill="#fff"/><rect x="5" y="6" width="3" height="2" fill="#fff"/><rect x="5" y="9" width="3" height="2" fill="#fff"/><rect x="9" y="3" width="3" height="2" fill="#fff"/><rect x="9" y="6" width="3" height="2" fill="#fff"/><rect x="9" y="9" width="3" height="2" fill="#fff"/></svg>
<div class="tr" style="left:42px;top:191px">Customer</div>
<div class="a" style="left:13px;top:205px;width:1px;height:8px;border-left:1px dotted #333"></div>
<svg style="left:9px;top:213px" width="9" height="9"><rect x="0.5" y="0.5" width="8" height="8" fill="#f4f4f6" stroke="#9a9aa4"/><path d="M2 4.5h5M4.5 2v5" stroke="#3a3a7a" stroke-width="1"/></svg>
<div class="a" style="left:19px;top:217px;width:1px;height:1px;background:#222"></div>
<svg style="left:23px;top:210px" width="13" height="12"><rect x="0" y="0" width="13" height="12" fill="#3a3a3a"/><rect x="1" y="3" width="3" height="2" fill="#fff"/><rect x="1" y="6" width="3" height="2" fill="#fff"/><rect x="1" y="9" width="3" height="2" fill="#fff"/><rect x="5" y="3" width="3" height="2" fill="#fff"/><rect x="5" y="6" width="3" height="2" fill="#fff"/><rect x="5" y="9" width="3" height="2" fill="#fff"/><rect x="9" y="3" width="3" height="2" fill="#fff"/><rect x="9" y="6" width="3" height="2" fill="#fff"/><rect x="9" y="9" width="3" height="2" fill="#fff"/></svg>
<div class="tr" style="left:42px;top:209px">Inventory</div>
<div class="a" style="left:13px;top:223px;width:1px;height:8px;border-left:1px dotted #333"></div>
<svg style="left:9px;top:231px" width="9" height="9"><rect x="0.5" y="0.5" width="8" height="8" fill="#f4f4f6" stroke="#9a9aa4"/><path d="M2 4.5h5M4.5 2v5" stroke="#3a3a7a" stroke-width="1"/></svg>
<div class="a" style="left:19px;top:235px;width:1px;height:1px;background:#222"></div>
<svg style="left:23px;top:228px" width="13" height="12"><rect x="0" y="0" width="13" height="12" fill="#3a3a3a"/><rect x="1" y="3" width="3" height="2" fill="#fff"/><rect x="1" y="6" width="3" height="2" fill="#fff"/><rect x="1" y="9" width="3" height="2" fill="#fff"/><rect x="5" y="3" width="3" height="2" fill="#fff"/><rect x="5" y="6" width="3" height="2" fill="#fff"/><rect x="5" y="9" width="3" height="2" fill="#fff"/><rect x="9" y="3" width="3" height="2" fill="#fff"/><rect x="9" y="6" width="3" height="2" fill="#fff"/><rect x="9" y="9" width="3" height="2" fill="#fff"/></svg>
<div class="tr" style="left:42px;top:227px">OrderDetail</div>
<div class="a" style="left:13px;top:241px;width:1px;height:8px;border-left:1px dotted #333"></div>
<svg style="left:9px;top:249px" width="9" height="9"><rect x="0.5" y="0.5" width="8" height="8" fill="#f4f4f6" stroke="#9a9aa4"/><path d="M2 4.5h5M4.5 2v5" stroke="#3a3a7a" stroke-width="1"/></svg>
<div class="a" style="left:19px;top:253px;width:1px;height:1px;background:#222"></div>
<svg style="left:23px;top:246px" width="13" height="12"><rect x="0" y="0" width="13" height="12" fill="#3a3a3a"/><rect x="1" y="3" width="3" height="2" fill="#fff"/><rect x="1" y="6" width="3" height="2" fill="#fff"/><rect x="1" y="9" width="3" height="2" fill="#fff"/><rect x="5" y="3" width="3" height="2" fill="#fff"/><rect x="5" y="6" width="3" height="2" fill="#fff"/><rect x="5" y="9" width="3" height="2" fill="#fff"/><rect x="9" y="3" width="3" height="2" fill="#fff"/><rect x="9" y="6" width="3" height="2" fill="#fff"/><rect x="9" y="9" width="3" height="2" fill="#fff"/></svg>
<div class="tr" style="left:42px;top:245px">OrderHeader</div>
<div class="a" style="left:13px;top:259px;width:1px;height:8px;border-left:1px dotted #333"></div>
<svg style="left:9px;top:267px" width="9" height="9"><rect x="0.5" y="0.5" width="8" height="8" fill="#f4f4f6" stroke="#9a9aa4"/><path d="M2 4.5h5M4.5 2v5" stroke="#3a3a7a" stroke-width="1"/></svg>
<div class="a" style="left:19px;top:271px;width:1px;height:1px;background:#222"></div>
<svg style="left:23px;top:264px" width="13" height="12"><rect x="0" y="0" width="13" height="12" fill="#3a3a3a"/><rect x="1" y="3" width="3" height="2" fill="#fff"/><rect x="1" y="6" width="3" height="2" fill="#fff"/><rect x="1" y="9" width="3" height="2" fill="#fff"/><rect x="5" y="3" width="3" height="2" fill="#fff"/><rect x="5" y="6" width="3" height="2" fill="#fff"/><rect x="5" y="9" width="3" height="2" fill="#fff"/><rect x="9" y="3" width="3" height="2" fill="#fff"/><rect x="9" y="6" width="3" height="2" fill="#fff"/><rect x="9" y="9" width="3" height="2" fill="#fff"/></svg>
<div class="tr" style="left:42px;top:263px">OrderSystem</div>
<div class="a" style="left:13px;top:277px;width:1px;height:8px;border-left:1px dotted #333"></div>
<svg style="left:9px;top:285px" width="9" height="9"><rect x="0.5" y="0.5" width="8" height="8" fill="#f4f4f6" stroke="#9a9aa4"/><path d="M2 4.5h5M4.5 2v5" stroke="#3a3a7a" stroke-width="1"/></svg>
<div class="a" style="left:19px;top:289px;width:1px;height:1px;background:#222"></div>
<svg style="left:23px;top:282px" width="13" height="12"><rect x="0" y="0" width="13" height="12" fill="#3a3a3a"/><rect x="1" y="3" width="3" height="2" fill="#fff"/><rect x="1" y="6" width="3" height="2" fill="#fff"/><rect x="1" y="9" width="3" height="2" fill="#fff"/><rect x="5" y="3" width="3" height="2" fill="#fff"/><rect x="5" y="6" width="3" height="2" fill="#fff"/><rect x="5" y="9" width="3" height="2" fill="#fff"/><rect x="9" y="3" width="3" height="2" fill="#fff"/><rect x="9" y="6" width="3" height="2" fill="#fff"/><rect x="9" y="9" width="3" height="2" fill="#fff"/></svg>
<div class="tr" style="left:42px;top:281px">SalesPerson</div>
<div class="a" style="left:13px;top:295px;width:1px;height:8px;border-left:1px dotted #333"></div>
<svg style="left:9px;top:303px" width="9" height="9"><rect x="0.5" y="0.5" width="8" height="8" fill="#f4f4f6" stroke="#9a9aa4"/><path d="M2 4.5h5M4.5 2v5" stroke="#3a3a7a" stroke-width="1"/></svg>
<div class="a" style="left:19px;top:307px;width:1px;height:1px;background:#222"></div>
<svg style="left:23px;top:300px" width="13" height="12"><rect x="0" y="0" width="13" height="12" fill="#3a3a3a"/><rect x="1" y="3" width="3" height="2" fill="#fff"/><rect x="1" y="6" width="3" height="2" fill="#fff"/><rect x="1" y="9" width="3" height="2" fill="#fff"/><rect x="5" y="3" width="3" height="2" fill="#fff"/><rect x="5" y="6" width="3" height="2" fill="#fff"/><rect x="5" y="9" width="3" height="2" fill="#fff"/><rect x="9" y="3" width="3" height="2" fill="#fff"/><rect x="9" y="6" width="3" height="2" fill="#fff"/><rect x="9" y="9" width="3" height="2" fill="#fff"/></svg>
<div class="tr" style="left:42px;top:299px">Vendor</div>
<div class="a" style="left:13px;top:313px;width:1px;height:8px;border-left:1px dotted #333"></div>
<svg style="left:9px;top:321px" width="9" height="9"><rect x="0.5" y="0.5" width="8" height="8" fill="#f4f4f6" stroke="#9a9aa4"/><path d="M2 4.5h5M4.5 2v5" stroke="#3a3a7a" stroke-width="1"/></svg>
<div class="a" style="left:19px;top:325px;width:1px;height:1px;background:#222"></div>
<svg style="left:23px;top:318px" width="13" height="12"><rect x="0" y="0" width="13" height="12" fill="#3a3a3a"/><rect x="1" y="3" width="3" height="2" fill="#fff"/><rect x="1" y="6" width="3" height="2" fill="#fff"/><rect x="1" y="9" width="3" height="2" fill="#fff"/><rect x="5" y="3" width="3" height="2" fill="#fff"/><rect x="5" y="6" width="3" height="2" fill="#fff"/><rect x="5" y="9" width="3" height="2" fill="#fff"/><rect x="9" y="3" width="3" height="2" fill="#fff"/><rect x="9" y="6" width="3" height="2" fill="#fff"/><rect x="9" y="9" width="3" height="2" fill="#fff"/></svg>
<div class="tr" style="left:42px;top:317px">WebAppServerProps</div>
<div class="a" style="left:13px;top:331px;width:1px;height:8px;border-left:1px dotted #333"></div>
<svg style="left:9px;top:339px" width="9" height="9"><rect x="0.5" y="0.5" width="8" height="8" fill="#f4f4f6" stroke="#9a9aa4"/><path d="M2 4.5h5M4.5 2v5" stroke="#3a3a7a" stroke-width="1"/></svg>
<div class="a" style="left:19px;top:343px;width:1px;height:1px;background:#222"></div>
<svg style="left:23px;top:336px" width="13" height="12"><rect x="0" y="0" width="13" height="12" fill="#3a3a3a"/><rect x="1" y="3" width="3" height="2" fill="#fff"/><rect x="1" y="6" width="3" height="2" fill="#fff"/><rect x="1" y="9" width="3" height="2" fill="#fff"/><rect x="5" y="3" width="3" height="2" fill="#fff"/><rect x="5" y="6" width="3" height="2" fill="#fff"/><rect x="5" y="9" width="3" height="2" fill="#fff"/><rect x="9" y="3" width="3" height="2" fill="#fff"/><rect x="9" y="6" width="3" height="2" fill="#fff"/><rect x="9" y="9" width="3" height="2" fill="#fff"/></svg>
<div class="tr" style="left:42px;top:335px">WebAppSession</div>
<div class="a" style="left:13px;top:349px;width:1px;height:8px;border-left:1px dotted #333"></div>
<svg style="left:9px;top:357px" width="9" height="9"><rect x="0.5" y="0.5" width="8" height="8" fill="#f4f4f6" stroke="#9a9aa4"/><path d="M2 4.5h5M4.5 2v5" stroke="#3a3a7a" stroke-width="1"/></svg>
<div class="a" style="left:19px;top:361px;width:1px;height:1px;background:#222"></div>
<svg style="left:23px;top:354px" width="13" height="12"><rect x="0" y="0" width="13" height="12" fill="#3a3a3a"/><rect x="1" y="3" width="3" height="2" fill="#fff"/><rect x="1" y="6" width="3" height="2" fill="#fff"/><rect x="1" y="9" width="3" height="2" fill="#fff"/><rect x="5" y="3" width="3" height="2" fill="#fff"/><rect x="5" y="6" width="3" height="2" fill="#fff"/><rect x="5" y="9" width="3" height="2" fill="#fff"/><rect x="9" y="3" width="3" height="2" fill="#fff"/><rect x="9" y="6" width="3" height="2" fill="#fff"/><rect x="9" y="9" width="3" height="2" fill="#fff"/></svg>
<div class="tr" style="left:42px;top:353px">WebAppUser</div>
<div class="a" style="left:1px;top:744px;width:102px;height:22px;background:#f7f7f9"></div>
<div class="a" style="left:103px;top:745px;width:99px;height:19px;background:#ececf0;border:1px solid #e0e0e6;border-top:none"></div>
<div class="a" style="left:203px;top:745px;width:98px;height:19px;background:#ececf0;border:1px solid #e0e0e6;border-top:none"></div>
<svg style="left:5px;top:747px" width="16" height="16"><rect x="6" y="0" width="10" height="9" fill="none" stroke="#424242"/><rect x="6" y="0" width="10" height="2" fill="#424242"/><rect x="3" y="3" width="10" height="9" fill="#f7f7f9" stroke="#424242"/><rect x="0" y="6" width="11" height="9" fill="#424242"/><path d="M0 9h11M0 12h11M4 6v9M8 6v9" stroke="#f7f7f9"/><circle cx="11" cy="10" r="2.5" fill="#f7f7f9" stroke="#424242" stroke-width="1.2"/><path d="M13 12l2 3" stroke="#424242" stroke-width="1.5"/></svg>
<div class="tr" style="left:25px;top:748px;font-size:11.6px">Table Explorer</div>
<svg style="left:108px;top:747px" width="14" height="14"><rect x="0" y="0" width="14" height="14" fill="#3a3a3a"/><rect x="1" y="2.5" width="12" height="10.5" fill="#f4efe6"/><path d="M3 5.5l2-1.5 2 1.5-2 1.5z" fill="#d9a040"/><path d="M7.5 9l2-1.5 2 1.5-2 1.5z" fill="#d9a040"/><path d="M5 7l3 2" stroke="#d9a040" stroke-width="1"/></svg>
<div class="tr" style="left:126px;top:747px;font-size:11.6px">Code Explor...</div>
<svg style="left:209px;top:747px" width="15" height="15"><path d="M8 0.5C3.8 0.5 0.5 3.7 0.5 7.8S3.8 15 8 15c2.6 0 4.5-1 5.9-2.6L9.6 8.2l4.3-4.4C12.5 1.8 10.4 0.5 8 0.5z" fill="#3a3a3a"/><circle cx="3.3" cy="6" r="0.9" fill="#e8e8e8"/><circle cx="5.8" cy="3.2" r="0.9" fill="#e8e8e8"/><circle cx="3.3" cy="9.8" r="0.9" fill="#e8e8e8"/><circle cx="5.8" cy="12.4" r="0.9" fill="#e8e8e8"/><circle cx="9.2" cy="2.8" r="0.9" fill="#e8e8e8"/></svg>
<div class="tr" style="left:227px;top:747px;font-size:11.6px">Class Palett...</div>
<svg style="left:9px;top:797px" width="10" height="12"><path d="M0.6 0.6h6.3l2.5 2.5v8.3H0.6z" fill="#fff" stroke="#3a3a3a" stroke-width="1.2"/><path d="M6.5 0.5v3h3z" fill="#3a3a3a"/><rect x="2" y="3" width="3" height="1" fill="#3a3a3a"/><rect x="2" y="5" width="6" height="1" fill="#3a3a3a"/><rect x="2" y="7" width="6" height="1" fill="#3a3a3a"/><rect x="2" y="9" width="6" height="1" fill="#3a3a3a"/></svg>
<div class="tr" style="left:27px;top:795px;font-weight:bold">ClientSortingDemo.wo</div>

<!-- EDITOR -->
<div class="a" style="left:316px;top:122px;width:1309px;height:1px;background:#2d6392"></div>
<div class="a" style="left:318px;top:104px;width:147px;height:19px;background:#167dcb"></div>
<div class="t" style="left:325px;top:106px;color:#fff;font-size:12px">ClientSortingDemo.wo</div>
<div class="a" style="left:316px;top:123px;width:1293px;height:681px;background:#fff"></div>
<div class="a" style="left:316px;top:123px;width:24px;height:681px;background:#dcdfee"></div>
<div class="a" style="left:316px;top:124px;width:1293px;height:680px;overflow:hidden"><div class="ln" style="top:0px;left:28px">31</div><div class="code" style="top:0px;left:52px">    <span class="k">Set</span> psCaption <span class="k">to</span> <span class="s">"Client-side Sorting demo"</span></div><div class="ln" style="top:18px;left:28px">32</div><div class="code" style="top:18px;left:52px">    <span class="k">Set</span> piMaxWidth <span class="k">to</span> 1024</div><div class="ln" style="top:36px;left:28px">33</div><div class="code" style="top:36px;left:52px">    <span class="k">Set</span> piColumnCount <span class="k">to</span> 6</div><div class="ln" style="top:54px;left:28px">34</div><div class="ln" style="top:72px;left:28px">35</div><div class="code" style="top:72px;left:52px">    <span class="k">WebSetResponsive</span> piColumnCount rmTabletPortrait <span class="k">to</span> 3</div><div class="ln" style="top:90px;left:28px">36</div><div class="ln" style="top:108px;left:28px">37</div><div class="code" style="top:108px;left:52px">    <span class="k">Object</span> oList <span class="k">is</span> <span class="k">a</span> cWebList</div><div class="ln" style="top:126px;left:28px">38</div><div class="code" style="top:126px;left:52px">        <span class="k">Set</span> peDbGridType <span class="k">to</span> gtAllData</div><div class="ln" style="top:144px;left:28px">39</div><div class="code" style="top:144px;left:52px">        <span class="k">Set</span> pbFillHeight <span class="k">to</span> <span class="k">True</span></div><div class="ln" style="top:162px;left:28px">40</div><div class="code" style="top:162px;left:52px">        <span class="k">Set</span> pbShowLabel <span class="k">to</span> <span class="k">False</span></div><div class="ln" style="top:180px;left:28px">41</div><div class="code" style="top:180px;left:52px">        <span class="k">Set</span> pbColumnSortable <span class="k">to</span> <span class="k">True</span></div><div class="ln" style="top:198px;left:28px">42</div><div class="ln" style="top:216px;left:28px">43</div><div class="code" style="top:216px;left:52px">        <span class="k">Object</span> oCustomerNumber <span class="k">is</span> <span class="k">a</span> cWebColumn</div><div class="ln" style="top:234px;left:28px">44</div><div class="code" style="top:234px;left:52px">            <span class="k">Entry_Item</span> OrderHeader.Customer_Number</div><div class="ln" style="top:252px;left:28px">45</div><div class="code" style="top:252px;left:52px">            <span class="k">Set</span> piWidth <span class="k">to</span> 149</div><div class="ln" style="top:270px;left:28px">46</div><div class="code" style="top:270px;left:52px">            <span class="k">Set</span> psCaption <span class="k">to</span> <span class="s">"Customer Number"</span></div><div class="ln" style="top:288px;left:28px">47</div><div class="code" style="top:288px;left:52px">            <span class="k">Set</span> pbPromptButton <span class="k">to</span> <span class="k">False</span></div><div class="ln" style="top:306px;left:28px">48</div><div class="code" style="top:306px;left:52px">        <span class="k">End_Object</span></div><div class="ln" style="top:324px;left:28px">49</div><div class="ln" style="top:342px;left:28px">50</div><div class="code" style="top:342px;left:52px">        <span class="k">Object</span> oCustomerName <span class="k">is</span> <span class="k">a</span> cWebColumn</div><div class="ln" style="top:360px;left:28px">51</div><div class="code" style="top:360px;left:52px">            <span class="k">Entry_Item</span> OrderHeader.Ship_Via</div><div class="ln" style="top:378px;left:28px">52</div><div class="code" style="top:378px;left:52px">            <span class="k">Set</span> piWidth <span class="k">to</span> 271</div><div class="ln" style="top:396px;left:28px">53</div><div class="code" style="top:396px;left:52px">            <span class="k">Set</span> psCaption <span class="k">to</span> <span class="s">"Ship Via"</span></div><div class="ln" style="top:414px;left:28px">54</div><div class="code" style="top:414px;left:52px">            <span class="k">Set</span> pbPromptButton <span class="k">to</span> <span class="k">False</span></div><div class="ln" style="top:432px;left:28px">55</div><div class="code" style="top:432px;left:52px">        <span class="k">End_Object</span></div><div class="ln" style="top:450px;left:28px">56</div><div class="ln" style="top:468px;left:28px">57</div><div class="code" style="top:468px;left:52px">        <span class="k">Object</span> oCustomerAddress <span class="k">is</span> <span class="k">a</span> cWebColumn</div><div class="ln" style="top:486px;left:28px">58</div><div class="code" style="top:486px;left:52px">            <span class="k">Entry_Item</span> OrderHeader.Order_Date</div><div class="ln" style="top:504px;left:28px">59</div><div class="code" style="top:504px;left:52px">            <span class="k">Set</span> piWidth <span class="k">to</span> 341</div><div class="ln" style="top:522px;left:28px">60</div><div class="code" style="top:522px;left:52px">            <span class="k">Set</span> psCaption <span class="k">to</span> <span class="s">"Order Date"</span></div><div class="ln" style="top:540px;left:28px">61</div><div class="code" style="top:540px;left:52px">            <span class="k">Set</span> pbSortable <span class="k">to</span> <span class="k">False</span></div><div class="ln" style="top:558px;left:28px">62</div><div class="code" style="top:558px;left:52px">        <span class="k">End_Object</span></div><div class="ln" style="top:576px;left:28px">63</div><div class="ln" style="top:594px;left:28px">64</div><div class="code" style="top:594px;left:52px">        <span class="k">Object</span> oCustomerStatus <span class="k">is</span> <span class="k">a</span> cWebColumn</div><div class="ln" style="top:612px;left:28px">65</div><div class="code" style="top:612px;left:52px">            <span class="k">Entry_Item</span> OrderHeader.Order_Status</div><div class="ln" style="top:630px;left:28px">66</div><div class="code" style="top:630px;left:52px">            <span class="k">Set</span> piWidth <span class="k">to</span> 120</div><div class="ln" style="top:648px;left:28px">67</div><div class="code" style="top:648px;left:52px">            <span class="k">Set</span> psCaption <span class="k">to</span> <span class="s">"Status"</span></div><div class="ln" style="top:666px;left:28px">68</div><div class="code" style="top:666px;left:52px">        <span class="k">End_Object</span></div></div>
<div class="a" style="left:1609px;top:123px;width:17px;height:681px;background:#ededed"></div>
<div class="a" style="left:316px;top:804px;width:1293px;height:18px;background:#eeeeef"></div>
<div class="a" style="left:340px;top:805px;width:861px;height:15px;background:#cbcbcb"></div>
<svg style="left:451px;top:107px" width="11" height="11"><path d="M1.2 1.2l8.6 8.6M9.8 1.2L1.2 9.8" stroke="#fff" stroke-width="2.3"/></svg>
<svg style="left:1573px;top:106px" width="6" height="10"><path d="M5.5 0.5v9L0.5 5z" fill="none" stroke="#a0a0a0"/></svg>
<svg style="left:1587px;top:106px" width="6" height="10"><path d="M0.5 0.5v9L5.5 5z" fill="none" stroke="#a0a0a0"/></svg>
<svg style="left:1599px;top:109px" width="8" height="5"><path d="M0 0h8L4 4z" fill="#555"/></svg>
<svg style="left:1612px;top:106px" width="11" height="11"><path d="M0.7 0.7l8.8 8.8M9.5 0.7l-8.8 8.8" stroke="#555" stroke-width="1.4"/></svg>
<div class="a" style="left:1609px;top:124px;width:15px;height:6px;background:#cbcbcb"></div>
<svg style="left:1612px;top:135px" width="9" height="6"><path d="M1 5L4.5 1.5 8 5" fill="none" stroke="#505050" stroke-width="1.8"/></svg>
<div class="a" style="left:1609px;top:384px;width:15px;height:293px;background:#cbcbcb"></div>
<svg style="left:1612px;top:792px" width="9" height="6"><path d="M1 1L4.5 4.5 8 1" fill="none" stroke="#505050" stroke-width="1.8"/></svg>
<div class="a" style="left:316px;top:805px;width:7px;height:15px;background:#cbcbcb"></div>
<svg style="left:329px;top:808px" width="6" height="9"><path d="M5 1L1.5 4.5 5 8" fill="none" stroke="#505050" stroke-width="1.8"/></svg>
<svg style="left:1597px;top:808px" width="6" height="9"><path d="M1 1L4.5 4.5 1 8" fill="none" stroke="#505050" stroke-width="1.8"/></svg>

<!-- OUTPUT -->
<div class="ptitle" style="left:314px;top:827px;width:1313px"><span class="tx">Output</span></div>
<div class="a" style="left:314px;top:873px;width:1313px;height:120px;background:#fff;border:1px solid #8e9297"></div>
<svg style="left:1598px;top:833px" width="8" height="10"><path d="M1.5 0v5.5M4.5 0v5.5" stroke="#111" stroke-width="1.2"/><path d="M0 6h6" stroke="#111" stroke-width="1.2"/><path d="M3 6.5v1.5" stroke="#666" stroke-width="1"/></svg>
<svg style="left:1614px;top:833px" width="8" height="8"><path d="M0.3 0.3l6.4 6.4M6.7 0.3l-6.4 6.4" stroke="#1e1e1e" stroke-width="1.2"/></svg>
<svg style="left:321px;top:852px" width="14" height="14"><circle cx="8.5" cy="8.5" r="3.3" fill="none" stroke="#424242" stroke-width="1.3"/><path d="M6 11L2.5 14.5" stroke="#424242" stroke-width="1.8"/><path d="M2 3.5h5" stroke="#1b5ea8" stroke-width="1.6"/><path d="M3 0.5L0 3.5 3 6.5z" fill="#1b5ea8"/></svg>
<svg style="left:342px;top:852px" width="14" height="14"><circle cx="8.5" cy="8.5" r="3.3" fill="none" stroke="#424242" stroke-width="1.3"/><path d="M6 11L2.5 14.5" stroke="#424242" stroke-width="1.8"/><path d="M0 3.5h5" stroke="#1b5ea8" stroke-width="1.6"/><path d="M4 0.5L7 3.5 4 6.5z" fill="#1b5ea8"/></svg>
<div class="sep" style="left:362px;top:851px;height:20px"></div>
<svg style="left:370px;top:853px" width="14" height="14"><path d="M0.5 4.5h7v9h-7z" fill="#eeeef2" stroke="#424242"/><path d="M4.5 0.5h5l3 3v7h-5" fill="none" stroke="#424242"/></svg>
<svg style="left:391px;top:853px" width="14" height="14"><path d="M1 1l12 12M13 1L1 13" stroke="#c1272d" stroke-width="2.2"/></svg>
<div class="sep" style="left:412px;top:851px;height:20px"></div>
<svg style="left:419px;top:853px" width="14" height="14"><path d="M0.5 0.5h9v2M0.5 0.5v9h2" fill="none" stroke="#424242"/><rect x="3.5" y="3.5" width="10" height="10" fill="#eeeef2" stroke="#424242"/><path d="M8.5 6v5M6 8.5h5" stroke="#1b5ea8" stroke-width="1.4"/></svg>
<svg style="left:441px;top:853px" width="14" height="14"><path d="M0.5 0.5h9v2M0.5 0.5v9h2" fill="none" stroke="#424242"/><rect x="3.5" y="3.5" width="10" height="10" fill="#eeeef2" stroke="#424242"/><path d="M6 8.5h5" stroke="#424242" stroke-width="1.4"/></svg>
<div class="a" style="left:327px;top:874px;width:1px;height:102px;border-left:1px dotted #555"></div>
<div class="a" style="left:342px;top:874px;width:1px;height:64px;border-left:1px dotted #555"></div>
<div class="a" style="left:343px;top:884px;width:6px;height:1px;border-top:1px dotted #555"></div>
<svg style="left:353px;top:877px" width="9" height="14"><path d="M0.8 0.8L8 7 0.8 13.2z" fill="none" stroke="#444" stroke-width="1.2"/></svg>
<div class="tr" style="left:371px;top:877px">Total Pages</div>
<div class="tr" style="left:442px;top:877px">: 0</div>
<div class="a" style="left:343px;top:902px;width:6px;height:1px;border-top:1px dotted #555"></div>
<svg style="left:353px;top:895px" width="9" height="14"><path d="M0.8 0.8L8 7 0.8 13.2z" fill="none" stroke="#444" stroke-width="1.2"/></svg>
<div class="tr" style="left:371px;top:895px">Static Data</div>
<div class="tr" style="left:439px;top:895px">: 335133</div>
<div class="a" style="left:343px;top:920px;width:6px;height:1px;border-top:1px dotted #555"></div>
<svg style="left:353px;top:913px" width="9" height="14"><path d="M0.8 0.8L8 7 0.8 13.2z" fill="none" stroke="#444" stroke-width="1.2"/></svg>
<div class="tr" style="left:371px;top:913px">Message area</div>
<div class="tr" style="left:451px;top:913px">: 210839</div>
<div class="a" style="left:343px;top:938px;width:6px;height:1px;border-top:1px dotted #555"></div>
<svg style="left:353px;top:931px" width="9" height="14"><path d="M0.8 0.8L8 7 0.8 13.2z" fill="none" stroke="#444" stroke-width="1.2"/></svg>
<div class="tr" style="left:371px;top:931px">Total Blocks</div>
<div class="tr" style="left:443px;top:931px">: 13254</div>
<div class="a" style="left:328px;top:956px;width:7px;height:1px;border-top:1px dotted #555"></div>
<div class="a" style="left:328px;top:974px;width:7px;height:1px;border-top:1px dotted #555"></div>
<svg style="left:336px;top:949px" width="14" height="14"><circle cx="7" cy="7" r="6.8" fill="#333"/><rect x="4" y="4" width="6" height="6" fill="#fff"/></svg>
<div class="tr" style="left:356px;top:949px">----Compile Finished----</div>
<div class="a" style="left:354px;top:965px;width:211px;height:17px;background:#ececec"></div>
<svg style="left:336px;top:967px" width="14" height="14"><circle cx="7" cy="7" r="7" fill="#2f8fd8"/><rect x="6" y="6" width="2.2" height="5.5" fill="#fff"/><circle cx="7.1" cy="3.8" r="1.2" fill="#fff"/></svg>
<div class="tr" style="left:356px;top:967px">Starting web application: WebListDemo</div>
<div class="a" style="left:1609px;top:874px;width:17px;height:118px;background:#efeff1"></div>
<svg style="left:1612px;top:881px" width="9" height="6"><path d="M1 5L4.5 1.5 8 5" fill="none" stroke="#505050" stroke-width="1.8"/></svg>
<div class="a" style="left:1610px;top:957px;width:14px;height:17px;background:#cbcbcb"></div>
<svg style="left:1612px;top:981px" width="9" height="6"><path d="M1 1L4.5 4.5 8 1" fill="none" stroke="#505050" stroke-width="1.8"/></svg>
<div class="a" style="left:315px;top:994px;width:68px;height:24px;background:#f7f7f9"></div>
<div class="a" style="left:383px;top:995px;width:152px;height:20px;background:#ececf0;border:1px solid #e0e0e6;border-top:none;border-left:none"></div>
<div class="a" style="left:535px;top:995px;width:92px;height:20px;background:#ececf0;border:1px solid #e0e0e6;border-top:none;border-left:none"></div>
<div class="a" style="left:627px;top:995px;width:89px;height:20px;background:#ececf0;border:1px solid #e0e0e6;border-top:none;border-left:none"></div>
<div class="a" style="left:716px;top:995px;width:205px;height:20px;background:#ececf0;border:1px solid #e0e0e6;border-top:none;border-left:none"></div>
<svg style="left:320px;top:998px" width="15" height="15"><path d="M8.5 1.5h-7v12h7" fill="none" stroke="#424242" stroke-width="1.2"/><path d="M4 7.5h7" stroke="#424242" stroke-width="1.8"/><path d="M9 3.5l5 4-5 4z" fill="#424242"/></svg>
<div class="tr" style="left:338px;top:998px">Output</div>
<svg style="left:390px;top:997px" width="12" height="15"><path d="M0.5 2.5h10v12h-10z" fill="none" stroke="#424242"/><rect x="3" y="0.5" width="5" height="3" fill="none" stroke="#424242"/><path d="M2.5 8l2 3 4-6" fill="none" stroke="#424242" stroke-width="1.3"/></svg>
<div class="tr" style="left:406px;top:997px">To Do List [WebApp.src]</div>
<svg style="left:542px;top:998px" width="14" height="15"><path d="M4.5 0.5h5l3 3v10h-8" fill="none" stroke="#424242"/><circle cx="5" cy="9" r="2.5" fill="none" stroke="#1b5ea8" stroke-width="1.2"/><path d="M3.5 10.5L0.5 13.5" stroke="#1b5ea8" stroke-width="1.5"/></svg>
<div class="tr" style="left:560px;top:997px">Find Results</div>
<svg style="left:633px;top:998px" width="14" height="14"><path d="M3.5 0.5h10v9h-3" fill="none" stroke="#424242" stroke-width="1.1"/><rect x="3" y="0" width="11" height="2" fill="#424242"/><circle cx="4.2" cy="9.5" r="4" fill="#d50d12"/></svg>
<div class="tr" style="left:652px;top:997px">Breakpoints</div>
<svg style="left:722px;top:998px" width="16" height="14"><rect x="0.5" y="0.5" width="15" height="13" fill="none" stroke="#424242"/><rect x="0" y="0" width="16" height="2" fill="#424242"/><path d="M4.5 5l4 8H0.5z" fill="#f0c419"/><path d="M9 8l2 3 4-6" fill="none" stroke="#424242" stroke-width="1.2"/></svg>
<div class="tr" style="left:741px;top:997px">Problem Resolution [WebApp.src]</div>

<!-- RIGHT PANEL -->
<div class="ptitle" style="left:1631px;top:101px;width:289px"><span class="tx">Workspace Explorer</span></div>
<div class="a" style="left:1631px;top:154px;width:289px;height:307px;background:#fff;border:1px solid #8e9297"></div>
<div class="ptitle" style="left:1631px;top:467px;width:289px"><span class="tx">Properties (Inactive)</span></div>
<div class="a" style="left:1627px;top:101px;width:4px;height:917px;background:#f6f6f8"></div>
<svg style="left:1891px;top:107px" width="8" height="10"><path d="M1.5 0v5.5M4.5 0v5.5" stroke="#111" stroke-width="1.2"/><path d="M0 6h6" stroke="#111" stroke-width="1.2"/><path d="M3 6.5v1.5" stroke="#666" stroke-width="1"/></svg>
<svg style="left:1908px;top:107px" width="8" height="8"><path d="M0.3 0.3l6.4 6.4M6.7 0.3l-6.4 6.4" stroke="#1e1e1e" stroke-width="1.2"/></svg>
<div class="tr" style="left:1637px;top:131px">Current Project:</div>
<div class="a" style="left:1726px;top:126px;width:193px;height:24px;background:#e2e2e3;border:1px solid #b8b8bc"></div>
<div class="tr" style="left:1730px;top:131px">WebApp.src</div>
<svg style="left:1904px;top:135px" width="9" height="6"><path d="M0.5 0.5L4.5 4.5 8.5 0.5" fill="none" stroke="#444" stroke-width="1.2"/></svg>
<div class="a" style="left:1659px;top:172px;width:1px;height:209px;border-left:1px dotted #333"></div>
<div class="a" style="left:1674px;top:191px;width:1px;height:136px;border-left:1px dotted #333"></div>
<svg style="left:1640px;top:162px" width="9" height="9"><rect x="0.5" y="0.5" width="8" height="8" fill="#f4f4f6" stroke="#9a9aa4"/><path d="M2 4.5h5" stroke="#3a3a7a"/></svg>
<div class="a" style="left:1650px;top:166px;width:1px;height:1px;background:#222"></div>
<svg style="left:1651px;top:158px" width="18" height="16"><g transform="translate(2,0)"><rect x="0" y="0" width="14" height="12" fill="#3a3a3a"/><rect x="1.2" y="2.2" width="11.6" height="8.6" fill="#f2f2f2"/></g><circle cx="5.4" cy="10.5" r="4.6" fill="#3a3a3a"/><path d="M2.0000000000000004 9.2h6.8M2.0000000000000004 11.8h6.8M4.1000000000000005 7.1v6.8M6.7 7.1v6.8" stroke="#fff" stroke-width="0.8"/></svg>
<div class="tr" style="left:1673px;top:158px">WebApp.src</div>
<svg style="left:1655px;top:180px" width="9" height="9"><rect x="0.5" y="0.5" width="8" height="8" fill="#f4f4f6" stroke="#9a9aa4"/><path d="M2 4.5h5" stroke="#3a3a7a"/></svg>
<div class="a" style="left:1665px;top:184px;width:1px;height:1px;background:#222"></div>
<svg style="left:1666px;top:176px" width="18" height="16"><g transform="translate(2,0)"><rect x="0" y="0" width="14" height="12" fill="#3a3a3a"/><rect x="1.2" y="2.2" width="11.6" height="8.6" fill="#f2f2f2"/><rect x="6" y="4" width="5" height="2" fill="#3a3a3a"/><rect x="9" y="7" width="2" height="2" fill="#3a3a3a"/></g><circle cx="5.4" cy="10.3" r="4.6" fill="#3a3a3a"/><path d="M2.0000000000000004 9.0h6.8M2.0000000000000004 11.600000000000001h6.8M4.1000000000000005 6.9v6.8M6.7 6.9v6.8" stroke="#fff" stroke-width="0.8"/></svg>
<div class="tr" style="left:1688px;top:176px">Web Views (8)</div>
<div class="a" style="left:1675px;top:202px;width:7px;height:1px;border-top:1px dotted #333"></div>
<svg style="left:1685px;top:195px" width="10" height="12"><path d="M0.6 0.6h6.3l2.5 2.5v8.3H0.6z" fill="#fff" stroke="#3a3a3a" stroke-width="1.2"/><path d="M6.5 0.5v3h3z" fill="#3a3a3a"/><rect x="2" y="3" width="3" height="1" fill="#3a3a3a"/><rect x="2" y="5" width="6" height="1" fill="#3a3a3a"/><rect x="2" y="7" width="6" height="1" fill="#3a3a3a"/><rect x="2" y="9" width="6" height="1" fill="#3a3a3a"/></svg>
<div class="tr" style="left:1703px;top:194px">ClientSortingDemo.wo</div>
<div class="a" style="left:1701px;top:211px;width:80px;height:17px;background:#eeeeee"></div>
<div class="a" style="left:1675px;top:220px;width:7px;height:1px;border-top:1px dotted #333"></div>
<svg style="left:1685px;top:213px" width="10" height="12"><path d="M0.6 0.6h6.3l2.5 2.5v8.3H0.6z" fill="#fff" stroke="#3a3a3a" stroke-width="1.2"/><path d="M6.5 0.5v3h3z" fill="#3a3a3a"/><rect x="2" y="3" width="3" height="1" fill="#3a3a3a"/><rect x="2" y="5" width="6" height="1" fill="#3a3a3a"/><rect x="2" y="7" width="6" height="1" fill="#3a3a3a"/><rect x="2" y="9" width="6" height="1" fill="#3a3a3a"/></svg>
<div class="tr" style="left:1703px;top:212px">Dashboard.wo</div>
<div class="a" style="left:1675px;top:238px;width:7px;height:1px;border-top:1px dotted #333"></div>
<svg style="left:1685px;top:231px" width="10" height="12"><path d="M0.6 0.6h6.3l2.5 2.5v8.3H0.6z" fill="#fff" stroke="#3a3a3a" stroke-width="1.2"/><path d="M6.5 0.5v3h3z" fill="#3a3a3a"/><rect x="2" y="3" width="3" height="1" fill="#3a3a3a"/><rect x="2" y="5" width="6" height="1" fill="#3a3a3a"/><rect x="2" y="7" width="6" height="1" fill="#3a3a3a"/><rect x="2" y="9" width="6" height="1" fill="#3a3a3a"/></svg>
<div class="tr" style="left:1703px;top:230px">ExpandPanelDemo.wo</div>
<div class="a" style="left:1675px;top:256px;width:7px;height:1px;border-top:1px dotted #333"></div>
<svg style="left:1685px;top:249px" width="10" height="12"><path d="M0.6 0.6h6.3l2.5 2.5v8.3H0.6z" fill="#fff" stroke="#3a3a3a" stroke-width="1.2"/><path d="M6.5 0.5v3h3z" fill="#3a3a3a"/><rect x="2" y="3" width="3" height="1" fill="#3a3a3a"/><rect x="2" y="5" width="6" height="1" fill="#3a3a3a"/><rect x="2" y="7" width="6" height="1" fill="#3a3a3a"/><rect x="2" y="9" width="6" height="1" fill="#3a3a3a"/></svg>
<div class="tr" style="left:1703px;top:248px">InfiniteScrollingDemo.wo</div>
<div class="a" style="left:1675px;top:274px;width:7px;height:1px;border-top:1px dotted #333"></div>
<svg style="left:1685px;top:267px" width="10" height="12"><path d="M0.6 0.6h6.3l2.5 2.5v8.3H0.6z" fill="#fff" stroke="#3a3a3a" stroke-width="1.2"/><path d="M6.5 0.5v3h3z" fill="#3a3a3a"/><rect x="2" y="3" width="3" height="1" fill="#3a3a3a"/><rect x="2" y="5" width="6" height="1" fill="#3a3a3a"/><rect x="2" y="7" width="6" height="1" fill="#3a3a3a"/><rect x="2" y="9" width="6" height="1" fill="#3a3a3a"/></svg>
<div class="tr" style="left:1703px;top:266px">Login.wo</div>
<div class="a" style="left:1675px;top:292px;width:7px;height:1px;border-top:1px dotted #333"></div>
<svg style="left:1685px;top:285px" width="10" height="12"><path d="M0.6 0.6h6.3l2.5 2.5v8.3H0.6z" fill="#fff" stroke="#3a3a3a" stroke-width="1.2"/><path d="M6.5 0.5v3h3z" fill="#3a3a3a"/><rect x="2" y="3" width="3" height="1" fill="#3a3a3a"/><rect x="2" y="5" width="6" height="1" fill="#3a3a3a"/><rect x="2" y="7" width="6" height="1" fill="#3a3a3a"/><rect x="2" y="9" width="6" height="1" fill="#3a3a3a"/></svg>
<div class="tr" style="left:1703px;top:284px">ManualLoadedListDemo.wo</div>
<div class="a" style="left:1675px;top:310px;width:7px;height:1px;border-top:1px dotted #333"></div>
<svg style="left:1685px;top:303px" width="10" height="12"><path d="M0.6 0.6h6.3l2.5 2.5v8.3H0.6z" fill="#fff" stroke="#3a3a3a" stroke-width="1.2"/><path d="M6.5 0.5v3h3z" fill="#3a3a3a"/><rect x="2" y="3" width="3" height="1" fill="#3a3a3a"/><rect x="2" y="5" width="6" height="1" fill="#3a3a3a"/><rect x="2" y="7" width="6" height="1" fill="#3a3a3a"/><rect x="2" y="9" width="6" height="1" fill="#3a3a3a"/></svg>
<div class="tr" style="left:1703px;top:302px">RowLayoutDemo.wo</div>
<div class="a" style="left:1675px;top:328px;width:7px;height:1px;border-top:1px dotted #333"></div>
<svg style="left:1685px;top:321px" width="10" height="12"><path d="M0.6 0.6h6.3l2.5 2.5v8.3H0.6z" fill="#fff" stroke="#3a3a3a" stroke-width="1.2"/><path d="M6.5 0.5v3h3z" fill="#3a3a3a"/><rect x="2" y="3" width="3" height="1" fill="#3a3a3a"/><rect x="2" y="5" width="6" height="1" fill="#3a3a3a"/><rect x="2" y="7" width="6" height="1" fill="#3a3a3a"/><rect x="2" y="9" width="6" height="1" fill="#3a3a3a"/></svg>
<div class="tr" style="left:1703px;top:320px">ScrollingDemo.wo</div>
<svg style="left:1655px;top:341px" width="9" height="9"><rect x="0.5" y="0.5" width="8" height="8" fill="#f4f4f6" stroke="#9a9aa4"/><path d="M2 4.5h5M4.5 2v5" stroke="#3a3a7a"/></svg>
<div class="a" style="left:1664px;top:345px;width:3px;height:1px;border-top:1px dotted #444"></div>
<svg style="left:1668px;top:338px" width="15" height="15"><circle cx="5" cy="10" r="4.3" fill="#fff" stroke="#333"/><path d="M1 10h8M5 6v8" stroke="#333" stroke-width="0.8"/><circle cx="11" cy="4" r="3.5" fill="#fff" stroke="#333"/><path d="M11 2v3" stroke="#333"/></svg>
<div class="tr" style="left:1688px;top:338px">Web Components (2)</div>
<svg style="left:1655px;top:359px" width="9" height="9"><rect x="0.5" y="0.5" width="8" height="8" fill="#f4f4f6" stroke="#9a9aa4"/><path d="M2 4.5h5M4.5 2v5" stroke="#3a3a7a"/></svg>
<div class="a" style="left:1664px;top:363px;width:3px;height:1px;border-top:1px dotted #444"></div>
<svg style="left:1668px;top:356px" width="15" height="15"><path d="M0.5 1.5h6v11h-6zM7.5 1.5h6v11h-6z" fill="#fff" stroke="#333"/></svg>
<div class="tr" style="left:1688px;top:356px">Data Dictionaries (3)</div>
<svg style="left:1655px;top:377px" width="9" height="9"><rect x="0.5" y="0.5" width="8" height="8" fill="#f4f4f6" stroke="#9a9aa4"/><path d="M2 4.5h5M4.5 2v5" stroke="#3a3a7a"/></svg>
<div class="a" style="left:1664px;top:381px;width:3px;height:1px;border-top:1px dotted #444"></div>
<svg style="left:1668px;top:374px" width="15" height="15"><path d="M4.5 0.5h6l2 2v8" fill="none" stroke="#333"/><path d="M2.5 2.5h6l2 2v8" fill="none" stroke="#333"/><path d="M0.5 4.5h7l2 2v8h-9z" fill="#fff" stroke="#333"/><path d="M2 8h5M2 10h5M2 12h5" stroke="#333" stroke-width="0.8"/></svg>
<div class="tr" style="left:1688px;top:374px">Other Files (11)</div>
<div class="a" style="left:1631px;top:486px;width:289px;height:532px;background:#efefef"></div>
<svg style="left:1891px;top:472px" width="8" height="10"><path d="M1.5 0v5.5M4.5 0v5.5" stroke="#111" stroke-width="1.2"/><path d="M0 6h6" stroke="#111" stroke-width="1.2"/><path d="M3 6.5v1.5" stroke="#666" stroke-width="1"/></svg>
<svg style="left:1907px;top:472px" width="8" height="8"><path d="M0.3 0.3l6.4 6.4M6.7 0.3l-6.4 6.4" stroke="#1e1e1e" stroke-width="1.2"/></svg>
<div class="a" style="left:1674px;top:493px;width:239px;height:24px;background:#ededed;border:1px solid #d9d9d9"></div>
<div class="a" style="left:1674px;top:526px;width:239px;height:23px;background:#ededed;border:1px solid #d9d9d9"></div>
<div class="a" style="left:1632px;top:564px;width:284px;height:428px;border:1px solid #dedede;background:#ededed"></div>
<div class="tr" style="left:1726px;top:574px;font-weight:bold;font-size:12px">Nothing to Model</div>
<div class="tr" style="left:1641px;top:604px;font-size:11.8px">No object, class or table is currently selected.</div>
<div class="tr" style="left:1641px;top:634px;font-size:11.8px">Hint:</div>
<div class="tr" style="left:1643px;top:657px;font-size:11.5px">&bull;</div>
<div class="tr" style="left:1650px;top:657px;font-size:11.5px">Select an object or a class via <span style="color:#3d78c2;text-decoration:underline">Code Explorer</span> or</div>
<div class="tr" style="left:1650px;top:672px;font-size:11.5px">the Visual Designer to view its properties.</div>
<div class="tr" style="left:1643px;top:695px;font-size:11.5px">&bull;</div>
<div class="tr" style="left:1650px;top:695px;font-size:11.5px">In the Code Editor position the cursor inside an</div>
<div class="tr" style="left:1650px;top:710px;font-size:11.5px">object or a class declaration and press Ctrl+F7.</div>
<div class="tr" style="left:1643px;top:733px;font-size:11.5px">&bull;</div>
<div class="tr" style="left:1650px;top:733px;font-size:11.5px">Select a Table via <span style="color:#3d78c2;text-decoration:underline">Table Explorer</span> or the Table</div>
<div class="tr" style="left:1650px;top:748px;font-size:11.5px">Editor to view its attribute properties.</div>
<div class="a" style="left:1632px;top:994px;width:135px;height:24px;background:#f7f7f9"></div>
<div class="a" style="left:1767px;top:995px;width:145px;height:20px;background:#ececf0;border:1px solid #e0e0e6;border-top:none;border-left:none"></div>
<svg style="left:1637px;top:997px" width="15" height="16"><rect x="3.5" y="0.5" width="11" height="13" fill="none" stroke="#424242" stroke-width="1.2"/><path d="M5.5 3h7M5.5 5.5h7M5.5 8h7M5.5 10.5h7" stroke="#424242"/><path d="M0 9h4v4h-4zM2 13v3" fill="#424242" stroke="#424242"/></svg>
<div class="tr" style="left:1655px;top:998px">Properties (Inactive)</div>
<svg style="left:1772px;top:997px" width="15" height="15"><path d="M6.5 6v4M2.5 10v4M10.5 10v4M2.5 10h8" fill="none" stroke="#424242" stroke-width="1.3"/><rect x="5" y="5" width="3" height="2" fill="#424242"/><rect x="1" y="13" width="3" height="2" fill="#424242"/><rect x="9" y="13" width="3" height="2" fill="#424242"/><ellipse cx="12" cy="2" rx="3" ry="1.5" fill="#424242"/><rect x="9" y="2" width="6" height="7" fill="#424242"/></svg>
<div class="tr" style="left:1790px;top:997px">DDO Explorer [Client...</div>

<div class="a" style="left:379px;top:579px;width:542px;height:133px;border:3px solid #e5501e"></div>
<svg style="left:704px;top:644px" width="8" height="16"><path d="M1 0.5h2.5M4.5 0.5H7M4 0.5v15M1 15.5h2.5M4.5 15.5H7" fill="none" stroke="#222" stroke-width="1"/></svg>
<div class="a" style="left:584px;top:683px;width:307px;height:20px;background:#ffffe1;border:1px solid #767676;box-shadow:1px 2px 2px rgba(0,0,0,0.35)"></div>
<div class="tr" style="left:591px;top:686px;font-size:12px;color:#1a1a1a">Property <b>Integer pbSortable</b> // { WebProperty=Client }</div>
<div class="a" style="left:582px;top:712px;width:374px;height:191px;background:#fff;border:1px solid #9a9a9a;box-shadow:2px 3px 3px rgba(0,0,0,0.3)"></div>
<svg style="left:589px;top:717px" width="11" height="9"><rect x="0.5" y="0.5" width="10" height="8" fill="#e6e6ea" stroke="#8d8d95"/><path d="M3.5 2.5h4M3.5 4.5h4M3.5 6.5h4" stroke="#555" stroke-width="0.9"/></svg>
<div class="tr" style="left:608px;top:714px;font-size:11.6px">faCompressed</div>
<svg style="left:589px;top:736px" width="11" height="9"><rect x="0.5" y="0.5" width="10" height="8" fill="#e6e6ea" stroke="#8d8d95"/><path d="M3.5 2.5h4M3.5 4.5h4M3.5 6.5h4" stroke="#555" stroke-width="0.9"/></svg>
<div class="tr" style="left:608px;top:733px;font-size:11.6px">faDirectory</div>
<svg style="left:589px;top:755px" width="11" height="9"><rect x="0.5" y="0.5" width="10" height="8" fill="#e6e6ea" stroke="#8d8d95"/><path d="M3.5 2.5h4M3.5 4.5h4M3.5 6.5h4" stroke="#555" stroke-width="0.9"/></svg>
<div class="tr" style="left:608px;top:752px;font-size:11.6px">faEncrypted</div>
<svg style="left:589px;top:774px" width="11" height="9"><rect x="0.5" y="0.5" width="10" height="8" fill="#e6e6ea" stroke="#8d8d95"/><path d="M3.5 2.5h4M3.5 4.5h4M3.5 6.5h4" stroke="#555" stroke-width="0.9"/></svg>
<div class="tr" style="left:608px;top:771px;font-size:11.6px">faHidden</div>
<svg style="left:589px;top:793px" width="11" height="9"><rect x="0.5" y="0.5" width="10" height="8" fill="#e6e6ea" stroke="#8d8d95"/><path d="M3.5 2.5h4M3.5 4.5h4M3.5 6.5h4" stroke="#555" stroke-width="0.9"/></svg>
<div class="a" style="left:604px;top:789px;width:333px;height:18px;background:#3a91ea;border:1px dotted #111"></div>
<div class="tr" style="left:608px;top:790px;color:#fff;font-size:11.6px">False</div>
<svg style="left:589px;top:812px" width="11" height="9"><rect x="0.5" y="0.5" width="10" height="8" fill="#e6e6ea" stroke="#8d8d95"/><path d="M3.5 2.5h4M3.5 4.5h4M3.5 6.5h4" stroke="#555" stroke-width="0.9"/></svg>
<div class="tr" style="left:608px;top:809px;font-size:11.6px">faNormal</div>
<svg style="left:589px;top:831px" width="11" height="9"><rect x="0.5" y="0.5" width="10" height="8" fill="#e6e6ea" stroke="#8d8d95"/><path d="M3.5 2.5h4M3.5 4.5h4M3.5 6.5h4" stroke="#555" stroke-width="0.9"/></svg>
<div class="tr" style="left:608px;top:828px;font-size:11.6px">faOffline</div>
<svg style="left:589px;top:850px" width="11" height="9"><rect x="0.5" y="0.5" width="10" height="8" fill="#e6e6ea" stroke="#8d8d95"/><path d="M3.5 2.5h4M3.5 4.5h4M3.5 6.5h4" stroke="#555" stroke-width="0.9"/></svg>
<div class="tr" style="left:608px;top:847px;font-size:11.6px">faReadOnly</div>
<svg style="left:589px;top:869px" width="11" height="9"><rect x="0.5" y="0.5" width="10" height="8" fill="#e6e6ea" stroke="#8d8d95"/><path d="M3.5 2.5h4M3.5 4.5h4M3.5 6.5h4" stroke="#555" stroke-width="0.9"/></svg>
<div class="tr" style="left:608px;top:866px;font-size:11.6px">faReparsePoint</div>
<svg style="left:589px;top:888px" width="11" height="9"><rect x="0.5" y="0.5" width="10" height="8" fill="#e6e6ea" stroke="#8d8d95"/><path d="M3.5 2.5h4M3.5 4.5h4M3.5 6.5h4" stroke="#555" stroke-width="0.9"/></svg>
<div class="tr" style="left:608px;top:885px;font-size:11.6px">faSparseFile</div>
<div class="a" style="left:938px;top:713px;width:17px;height:189px;background:#f0f0f0"></div>
<svg style="left:942px;top:717px" width="9" height="6"><path d="M1 5L4.5 1.5 8 5" fill="none" stroke="#505050" stroke-width="1.8"/></svg>
<div class="a" style="left:939px;top:803px;width:15px;height:16px;background:#cdcdcd"></div>
<svg style="left:942px;top:890px" width="9" height="6"><path d="M1 1L4.5 4.5 8 1" fill="none" stroke="#505050" stroke-width="1.8"/></svg>

<!-- STATUS BAR -->
<div class="a" style="left:0;top:1018px;width:1920px;height:22px;background:#0b7ccd"></div>
<div class="t" style="left:3px;top:1023px;color:#fff;letter-spacing:0.08px">C:\projects\WebListDemo\AppSrc\ClientSortingDemo.wo</div>
<!-- TASKBAR -->
<div class="a" style="left:0;top:1040px;width:1920px;height:40px;background:#1e428b"></div>
<div class="tr" style="left:1537px;top:1022px;color:#fff">Ln 61</div>
<div class="tr" style="left:1577px;top:1022px;color:#fff">Col 36</div>
<svg style="left:1691px;top:1021px" width="16" height="16"><circle cx="8" cy="8" r="7.2" fill="#fff" stroke="#c8102e" stroke-width="1.4"/><circle cx="8" cy="8" r="5.6" fill="#d8232a"/><rect x="7" y="3.5" width="2" height="5.5" fill="#fff"/><rect x="7" y="10.3" width="2" height="2" fill="#fff"/></svg>
<svg style="left:1759px;top:1021px" width="16" height="16"><circle cx="8" cy="8" r="6.5" fill="none" stroke="#ddd" stroke-width="2.2"/><path d="M3.5 3.5l9 9" stroke="#ddd" stroke-width="2.2"/></svg>
<div class="tr" style="left:1793px;top:1022px;color:#fff">INS</div>
<div class="tr" style="left:1837px;top:1022px;color:#7fbdf0">CAPS</div>
<div class="tr" style="left:1882px;top:1022px;color:#fff">NUM</div>
<div class="a" style="left:196px;top:1040px;width:48px;height:40px;background:#2c5aab"></div>
<div class="a" style="left:151px;top:1078px;width:40px;height:2px;background:#8fa6d2"></div>
<div class="a" style="left:196px;top:1078px;width:48px;height:2px;background:#a9bce0"></div>
<svg style="left:16px;top:1052px" width="16" height="16"><path d="M0 2.2L6.6 1.3V7.6H0zM7.4 1.2L16 0V7.6H7.4zM0 8.4H6.6V14.7L0 13.8zM7.4 8.4H16V16L7.4 14.8z" fill="#fff"/></svg>
<svg style="left:63px;top:1051px" width="18" height="18"><circle cx="10.5" cy="7" r="5.8" fill="none" stroke="#fff" stroke-width="1.4"/><path d="M6.5 11L1 16.5" stroke="#fff" stroke-width="1.6"/></svg>
<svg style="left:111px;top:1052px" width="18" height="16"><path d="M0.5 0v16" stroke="#fff"/><path d="M0 0.5h12M0 15.5h12" stroke="#fff"/><rect x="2.5" y="4.5" width="8" height="7" fill="none" stroke="#fff"/><rect x="15" y="0" width="2" height="2" fill="#fff"/><path d="M16 4v12" stroke="#fff" stroke-width="1.2"/></svg>
<svg style="left:159px;top:1048px" width="24" height="24"><circle cx="12" cy="12" r="11.5" fill="#db4437"/><path d="M12 12L22.4 6A12 12 0 0 1 12 23.5z" fill="#f4c20d"/><path d="M12 12L12 23.5A11.5 11.5 0 0 1 1.6 6z" fill="#0f9d58"/><circle cx="12" cy="12" r="5.3" fill="#fff"/><circle cx="12" cy="12" r="4.2" fill="#4285f4"/></svg>
<svg style="left:208px;top:1048px" width="24" height="24"><path d="M0 0H24V19L19 24H0Z" fill="#d8411b"/><path d="M4.5 6.5H11c3 0 4.5 2 4.5 5.5S14 17.5 11 17.5H4.5zM7 9v6" fill="none" stroke="#fff" stroke-width="2.2"/><path d="M13 6.5h7.5M13 6.5v11M13 11.5h6" fill="none" stroke="#fff" stroke-width="2.2"/></svg>
</body></html>
